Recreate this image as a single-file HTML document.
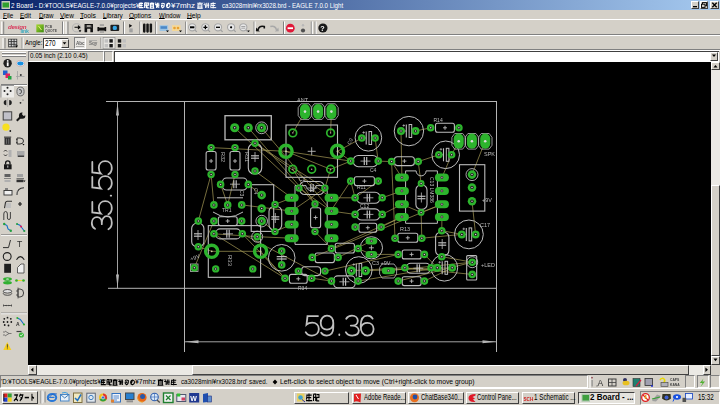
<!DOCTYPE html>
<html><head><meta charset="utf-8">
<style>
*{margin:0;padding:0;box-sizing:border-box}
html,body{width:720px;height:405px;overflow:hidden;background:#d4d0c8}
body{position:relative;font-family:"Liberation Sans",sans-serif;color:#000}
.a{position:absolute}
.t{position:absolute;white-space:nowrap;line-height:1;transform-origin:0 0}
.sunk{position:absolute;border-top:1px solid #808080;border-left:1px solid #808080;border-bottom:1px solid #fff;border-right:1px solid #fff}
.rais{position:absolute;border-top:1px solid #fff;border-left:1px solid #fff;border-bottom:1px solid #404040;border-right:1px solid #404040;background:#d4d0c8}
.kj{position:absolute}.kj i{position:absolute;top:0;bottom:0;border:1px solid currentColor;border-width:1px 1px 0 1px;background:linear-gradient(currentColor,currentColor) 0 45%/100% 1px no-repeat;opacity:.75}
u{text-underline-offset:0.2px;text-decoration-thickness:0.8px}
svg text{font-family:"Liberation Sans",sans-serif}
</style></head><body>
<!-- title bar -->
<div class="a" style="left:0;top:0;width:720px;height:10px;background:linear-gradient(90deg,#0a246a 0%,#a6caf0 100%)"></div>
<div class="rais" style="left:691px;top:1px;width:8px;height:8px"></div>
<div class="rais" style="left:700px;top:1px;width:8px;height:8px"></div>
<div class="rais" style="left:710px;top:1px;width:9px;height:8px"></div>
<!-- menu -->
<!-- toolbar separators -->
<div class="a" style="left:0;top:19px;width:720px;height:1px;background:#fff"></div>
<div class="a" style="left:0;top:34px;width:720px;height:1px;background:#808080"></div>
<div class="a" style="left:0;top:35px;width:720px;height:1px;background:#fff"></div>
<div class="a" style="left:0;top:49px;width:720px;height:1px;background:#808080"></div>
<div class="a" style="left:0;top:50px;width:720px;height:1px;background:#fff"></div>
<!-- toolbar 2 texts -->
<div class="a" style="left:43px;top:38px;width:26px;height:10.5px;background:#fff;border-top:1px solid #404040;border-left:1px solid #404040;border-bottom:1px solid #fff;border-right:1px solid #fff"></div>
<div class="rais" style="left:60.5px;top:39px;width:8px;height:8.5px"></div>
<div class="sunk" style="left:74px;top:37px;width:12px;height:12px;background:#e8e6e2"></div>
<!-- coordinate row -->
<div class="sunk" style="left:28px;top:50.5px;width:75.5px;height:11px"></div>
<div class="sunk" style="left:104px;top:50.5px;width:8.5px;height:11px"></div>
<div class="a" style="left:113.5px;top:50.5px;width:605px;height:11px;background:#fff;border-top:1px solid #404040;border-left:1px solid #404040"></div>
<div class="rais" style="left:710px;top:51.5px;width:8px;height:9px"></div>
<!-- canvas -->
<div class="a" style="left:28px;top:62px;width:683px;height:303px;background:#000"></div>
<!-- v scrollbar -->
<div class="a" style="left:711px;top:62px;width:9px;height:303px;background:#ebe9e4"></div>
<div class="rais" style="left:711px;top:62px;width:9px;height:8px"></div>
<div class="rais" style="left:711px;top:184.5px;width:9px;height:171px"></div>
<div class="rais" style="left:711px;top:356px;width:9px;height:8.5px"></div>
<!-- h scrollbar -->
<div class="a" style="left:28px;top:365px;width:683px;height:9.5px;background:#ebe9e4"></div>
<div class="rais" style="left:28px;top:365px;width:9px;height:9.5px"></div>
<div class="rais" style="left:191.5px;top:365px;width:497.5px;height:9.5px"></div>
<div class="rais" style="left:702.5px;top:365px;width:8.5px;height:9.5px"></div>
<!-- status bar -->
<div class="sunk" style="left:0;top:375px;width:588px;height:13px"></div>
<div class="sunk" style="left:685px;top:375px;width:10px;height:13px"></div>
<div class="sunk" style="left:697px;top:375px;width:12px;height:13px"></div>
<div class="sunk" style="left:710px;top:375px;width:10px;height:13px"></div>
<!-- taskbar -->
<div class="a" style="left:0;top:388px;width:720px;height:17px;background:#d4d0c8;border-top:1px solid #fff"></div>
<div class="rais" style="left:2px;top:391px;width:36px;height:13px"></div>
<div class="rais" style="left:294px;top:391.5px;width:55px;height:12.5px"></div>
<div class="rais" style="left:351.5px;top:391.5px;width:54.5px;height:12.5px"></div>
<div class="rais" style="left:408px;top:391.5px;width:55.5px;height:12.5px"></div>
<div class="rais" style="left:465.5px;top:391.5px;width:53.5px;height:12.5px"></div>
<div class="rais" style="left:521.5px;top:391.5px;width:53.5px;height:12.5px"></div>
<div class="a" style="left:577.5px;top:391.5px;width:57px;height:12.5px;background:#e4e2dc;border-top:1px solid #404040;border-left:1px solid #404040;border-bottom:1px solid #fff;border-right:1px solid #fff"></div>
<div class="sunk" style="left:639.5px;top:391px;width:80.5px;height:13.5px"></div>
<div class="t" id="t1" style="left:10.60px;top:1.61px;font-size:7.54px;font-weight:normal;color:#fff;transform:scaleX(0.8365)">2 Board - D:¥TOOLS¥EAGLE-7.0.0¥projects¥</div>
<div class="t" id="t3" style="left:170.90px;top:1.61px;font-size:7.54px;font-weight:normal;color:#fff;transform:scaleX(1.0659)">¥7mhz</div>
<div class="t" id="t5" style="left:221.60px;top:1.61px;font-size:7.54px;font-weight:normal;color:#fff;transform:scaleX(0.8194)">ca3028mini¥rx3028.brd - EAGLE 7.0.0 Light</div>
<div class="t" id="m1" style="left:3.10px;top:12.08px;font-size:7.00px;font-weight:normal;color:#000;transform:scaleX(0.9118)"><u>F</u>ile</div>
<div class="t" id="m2" style="left:20.40px;top:12.08px;font-size:7.00px;font-weight:normal;color:#000;transform:scaleX(0.9149)"><u>E</u>dit</div>
<div class="t" id="m3" style="left:38.50px;top:12.08px;font-size:7.00px;font-weight:normal;color:#000;transform:scaleX(0.8872)"><u>D</u>raw</div>
<div class="t" id="m4" style="left:60.00px;top:12.08px;font-size:7.00px;font-weight:normal;color:#000;transform:scaleX(0.9162)"><u>V</u>iew</div>
<div class="t" id="m5" style="left:80.20px;top:12.08px;font-size:7.00px;font-weight:normal;color:#000;transform:scaleX(0.9667)"><u>T</u>ools</div>
<div class="t" id="m6" style="left:103.20px;top:12.08px;font-size:7.00px;font-weight:normal;color:#000;transform:scaleX(0.9243)"><u>L</u>ibrary</div>
<div class="t" id="m7" style="left:129.30px;top:12.08px;font-size:7.00px;font-weight:normal;color:#000;transform:scaleX(0.9175)"><u>O</u>ptions</div>
<div class="t" id="m8" style="left:158.50px;top:12.08px;font-size:7.00px;font-weight:normal;color:#000;transform:scaleX(0.8592)"><u>W</u>indow</div>
<div class="t" id="m9" style="left:187.00px;top:12.08px;font-size:7.00px;font-weight:normal;color:#000;transform:scaleX(0.9510)"><u>H</u>elp</div>
<div class="t" id="an" style="left:25.20px;top:39.66px;font-size:7.13px;font-weight:normal;color:#000;transform:scaleX(0.8662)">Angle:</div>
<div class="t" id="a2" style="left:44.60px;top:39.63px;font-size:8.23px;font-weight:normal;color:#000;transform:scaleX(0.7727)">270</div>
<div class="t" id="co" style="left:30.20px;top:52.42px;font-size:7.06px;font-weight:normal;color:#000;transform:scaleX(0.8895)">0.05 inch (2.10 0.45)</div>
<div class="t" id="s1" style="left:1.10px;top:378.30px;font-size:7.68px;font-weight:normal;color:#000;transform:scaleX(0.8047)">'D:¥TOOLS¥EAGLE-7.0.0¥projects¥</div>
<div class="t" id="s3" style="left:135.40px;top:378.30px;font-size:7.68px;font-weight:normal;color:#000;transform:scaleX(0.8944)">¥7mhz</div>
<div class="t" id="s5" style="left:181.30px;top:378.30px;font-size:7.68px;font-weight:normal;color:#000;transform:scaleX(0.8121)">ca3028mini¥rx3028.brd' saved.</div>
<div class="t" id="s7" style="left:279.60px;top:378.30px;font-size:7.68px;font-weight:normal;color:#000;transform:scaleX(0.8837)">Left-click to select object to move (Ctrl+right-click to move group)</div>
<div class="t" id="b1" style="left:363.60px;top:393.53px;font-size:8.23px;font-weight:normal;color:#000;transform:scaleX(0.7282)">Adobe Reade...</div>
<div class="t" id="b2" style="left:420.60px;top:393.53px;font-size:8.23px;font-weight:normal;color:#000;transform:scaleX(0.7341)">ChatBase340...</div>
<div class="t" id="b3" style="left:476.60px;top:393.53px;font-size:8.23px;font-weight:normal;color:#000;transform:scaleX(0.7223)">Control Pane...</div>
<div class="t" id="b4" style="left:533.60px;top:393.53px;font-size:8.23px;font-weight:normal;color:#000;transform:scaleX(0.7653)">1 Schematic ...</div>
<div class="t" id="b5" style="left:589.60px;top:393.53px;font-size:8.23px;font-weight:bold;color:#000;transform:scaleX(0.9740)">2 Board - ...</div>
<div class="t" id="ck" style="left:697.90px;top:393.53px;font-size:8.23px;font-weight:normal;color:#000;transform:scaleX(0.7581)">15:32</div>
<svg class="a" style="left:0;top:0" width="720" height="405" viewBox="0 0 720 405"><path transform="translate(138.80,2.30) scale(0.769,0.952)" d="M0.3,1.2H5.5M2.9,0V6.3M0.8,3.3H5M0,5.6H6M1,1.2L0.4,4.8" fill="none" stroke="#fff" stroke-width="1.30"/><path transform="translate(144.22,2.30) scale(0.769,0.952)" d="M0.5,0.5H2.6V6M0.5,0.5V6M0.5,3H2.6M3.4,0.8H5.8V3H3.6V5.8H6" fill="none" stroke="#fff" stroke-width="1.30"/><path transform="translate(149.63,2.30) scale(0.769,0.952)" d="M0.2,1H6M3,0V1.2M1,2H5V6H1ZM1,4H5M0,6.2H6" fill="none" stroke="#fff" stroke-width="1.30"/><path transform="translate(155.05,2.30) scale(0.769,0.952)" d="M0.5,0.4L1.6,1.6M0,2.5H2V6M3.2,0.5V5.5M4.8,0.5V6M3.2,3H5.8" fill="none" stroke="#fff" stroke-width="1.30"/><path transform="translate(160.47,2.30) scale(0.769,0.952)" d="M1,1.5Q3,0.5 5,1.5Q5.5,4.5 3,5.8Q0.8,5 1.2,3.2Q2.5,2.2 3.5,4" fill="none" stroke="#fff" stroke-width="1.30"/><path transform="translate(165.88,2.30) scale(0.769,0.952)" d="M3,1Q0.5,1.5 0.8,4Q1.2,6 3.2,5.6Q5.6,5 5.4,3Q5,0.8 3,1M3,1Q2,4 1,5.5" fill="none" stroke="#fff" stroke-width="1.30"/><path transform="translate(197.00,2.30) scale(0.978,0.952)" d="M0.2,1H6M3,0V1.2M1,2H5V6H1ZM1,4H5M0,6.2H6" fill="none" stroke="#fff" stroke-width="1.02"/><path transform="translate(203.67,2.30) scale(0.978,0.952)" d="M0.5,0.4L1.6,1.6M0,2.5H2V6M3.2,0.5V5.5M4.8,0.5V6M3.2,3H5.8" fill="none" stroke="#fff" stroke-width="1.02"/><path transform="translate(210.33,2.30) scale(0.978,0.952)" d="M0.3,1.2H5.5M2.9,0V6.3M0.8,3.3H5M0,5.6H6M1,1.2L0.4,4.8" fill="none" stroke="#fff" stroke-width="1.02"/><path transform="translate(100.80,379.00) scale(0.839,1.000)" d="M0.3,1.2H5.5M2.9,0V6.3M0.8,3.3H5M0,5.6H6M1,1.2L0.4,4.8" fill="none" stroke="#000" stroke-width="1.19"/><path transform="translate(106.63,379.00) scale(0.839,1.000)" d="M0.5,0.5H2.6V6M0.5,0.5V6M0.5,3H2.6M3.4,0.8H5.8V3H3.6V5.8H6" fill="none" stroke="#000" stroke-width="1.19"/><path transform="translate(112.47,379.00) scale(0.839,1.000)" d="M0.2,1H6M3,0V1.2M1,2H5V6H1ZM1,4H5M0,6.2H6" fill="none" stroke="#000" stroke-width="1.19"/><path transform="translate(118.30,379.00) scale(0.839,1.000)" d="M0.5,0.4L1.6,1.6M0,2.5H2V6M3.2,0.5V5.5M4.8,0.5V6M3.2,3H5.8" fill="none" stroke="#000" stroke-width="1.19"/><path transform="translate(124.13,379.00) scale(0.839,1.000)" d="M1,1.5Q3,0.5 5,1.5Q5.5,4.5 3,5.8Q0.8,5 1.2,3.2Q2.5,2.2 3.5,4" fill="none" stroke="#000" stroke-width="1.19"/><path transform="translate(129.97,379.00) scale(0.839,1.000)" d="M3,1Q0.5,1.5 0.8,4Q1.2,6 3.2,5.6Q5.6,5 5.4,3Q5,0.8 3,1M3,1Q2,4 1,5.5" fill="none" stroke="#000" stroke-width="1.19"/><path transform="translate(157.50,379.00) scale(0.978,1.000)" d="M0.2,1H6M3,0V1.2M1,2H5V6H1ZM1,4H5M0,6.2H6" fill="none" stroke="#000" stroke-width="1.02"/><path transform="translate(164.17,379.00) scale(0.978,1.000)" d="M0.5,0.4L1.6,1.6M0,2.5H2V6M3.2,0.5V5.5M4.8,0.5V6M3.2,3H5.8" fill="none" stroke="#000" stroke-width="1.02"/><path transform="translate(170.83,379.00) scale(0.978,1.000)" d="M0.3,1.2H5.5M2.9,0V6.3M0.8,3.3H5M0,5.6H6M1,1.2L0.4,4.8" fill="none" stroke="#000" stroke-width="1.02"/><path transform="translate(13.50,393.80) scale(0.783,1.175)" d="M1,1H5Q4,4 0.5,6M3,3.5L5.5,6" fill="none" stroke="#000" stroke-width="1.28"/><path transform="translate(19.00,393.80) scale(0.783,1.175)" d="M2,0L0.5,2.5M1.5,1H5Q4.5,4 1,6M2,3L4,4.5" fill="none" stroke="#000" stroke-width="1.28"/><path transform="translate(24.50,393.80) scale(0.783,1.175)" d="M0.3,3.2H5.7" fill="none" stroke="#000" stroke-width="1.28"/><path transform="translate(30.00,393.80) scale(0.783,1.175)" d="M2.5,0V6M2.5,2.5L5,3.8" fill="none" stroke="#000" stroke-width="1.28"/><path transform="translate(306.00,393.50) scale(1.033,1.270)" d="M0.3,1.2H5.5M2.9,0V6.3M0.8,3.3H5M0,5.6H6M1,1.2L0.4,4.8" fill="none" stroke="#000" stroke-width="0.97"/><path transform="translate(313.00,393.50) scale(1.033,1.270)" d="M0.5,0.5H2.6V6M0.5,0.5V6M0.5,3H2.6M3.4,0.8H5.8V3H3.6V5.8H6" fill="none" stroke="#000" stroke-width="0.97"/></svg>
<svg class="a" style="left:28px;top:62px;will-change:transform" width="683" height="303" viewBox="28 62 683 303">

<line x1="106" y1="101.5" x2="497" y2="101.5" stroke="#b4b4b4" stroke-width="1"/>
<line x1="108" y1="288.3" x2="497" y2="288.3" stroke="#b4b4b4" stroke-width="1"/>
<line x1="184.5" y1="101.5" x2="184.5" y2="352" stroke="#b4b4b4" stroke-width="1"/>
<line x1="496.5" y1="101.5" x2="496.5" y2="352" stroke="#b4b4b4" stroke-width="1"/>
<line x1="117.5" y1="101.5" x2="117.5" y2="288.3" stroke="#b4b4b4" stroke-width="0.9"/>
<path d="M117.5,102 L116,115.5 L119,115.5 Z M117.5,288 L116,274.5 L119,274.5 Z" fill="#b4b4b4"/>
<line x1="184.5" y1="341.8" x2="496.5" y2="341.8" stroke="#b4b4b4" stroke-width="0.9"/>
<path d="M185,341.8 L198.5,340.3 L198.5,343.3 Z M496,341.8 L482.5,340.3 L482.5,343.3 Z" fill="#b4b4b4"/>
<g transform="translate(305,315.6)" fill="none" stroke="#c0c0c0" stroke-width="1.8" stroke-linecap="round"><path transform="translate(0,0)" d="M13,0.5 H2.5 L1.5,9 C3,7.6 5,7 7.2,7 C11,7 13.8,9.6 13.8,13.4 C13.8,17.2 11,20 7,20 C4,20 1.8,18.7 0.7,16.6"/><path transform="translate(15,0)" d="M13.3,7.5 C13.3,11.5 10.5,14 7,14 C3.3,14 0.7,11.4 0.7,7.2 C0.7,3 3.5,0 7,0 C10.8,0 13.3,3 13.3,7.5 V12 C13.3,17 10.8,20 6.8,20 C4.3,20 2.4,19 1.2,17.2"/><path transform="translate(32.5,0)" d="M1.8,18.9 L1.8,19.4"/><path transform="translate(40,0)" d="M1.2,3.2 C2.3,1.2 4.4,0 7,0 C10.4,0 12.8,2.2 12.8,5.2 C12.8,8 10.6,10 7.3,10 H5.8 M7.3,10 C11.2,10 13.8,12.4 13.8,15 C13.8,18 11.2,20 7.2,20 C4.2,20 1.9,18.7 0.8,16.6"/><path transform="translate(55,0)" d="M12.6,3 C11.6,1.1 9.7,0 7.4,0 C3.2,0 0.7,4 0.7,10.5 C0.7,16.5 3.2,20 7.3,20 C11,20 13.6,17.3 13.6,13.5 C13.6,9.8 11,7.3 7.4,7.3 C4.3,7.3 1.9,9 0.8,12"/></g>
<g transform="translate(91.8,230) rotate(-90)" fill="none" stroke="#c0c0c0" stroke-width="1.8" stroke-linecap="round"><path transform="translate(0,0)" d="M1.2,3.2 C2.3,1.2 4.4,0 7,0 C10.4,0 12.8,2.2 12.8,5.2 C12.8,8 10.6,10 7.3,10 H5.8 M7.3,10 C11.2,10 13.8,12.4 13.8,15 C13.8,18 11.2,20 7.2,20 C4.2,20 1.9,18.7 0.8,16.6"/><path transform="translate(15,0)" d="M13,0.5 H2.5 L1.5,9 C3,7.6 5,7 7.2,7 C11,7 13.8,9.6 13.8,13.4 C13.8,17.2 11,20 7,20 C4,20 1.8,18.7 0.7,16.6"/><path transform="translate(32.5,0)" d="M1.8,18.9 L1.8,19.4"/><path transform="translate(40,0)" d="M13,0.5 H2.5 L1.5,9 C3,7.6 5,7 7.2,7 C11,7 13.8,9.6 13.8,13.4 C13.8,17.2 11,20 7,20 C4,20 1.8,18.7 0.7,16.6"/><path transform="translate(55,0)" d="M13,0.5 H2.5 L1.5,9 C3,7.6 5,7 7.2,7 C11,7 13.8,9.6 13.8,13.4 C13.8,17.2 11,20 7,20 C4,20 1.8,18.7 0.7,16.6"/></g>
<path d="M211.1,147.6 L286,151.3" fill="none" stroke="#a89c58" stroke-width="0.7"/>
<path d="M234.7,127.8 L298.9,188.1" fill="none" stroke="#a89c58" stroke-width="0.7"/>
<path d="M248.3,127.8 L315,204" fill="none" stroke="#a89c58" stroke-width="0.7"/>
<path d="M261.6,127.8 L331.5,211.1" fill="none" stroke="#a89c58" stroke-width="0.7"/>
<path d="M255,143.3 L324.9,188.1" fill="none" stroke="#a89c58" stroke-width="0.7"/>
<path d="M255,143.3 L331.5,197.8" fill="none" stroke="#a89c58" stroke-width="0.7"/>
<path d="M286,151.3 L330.6,169.3" fill="none" stroke="#a89c58" stroke-width="0.7"/>
<path d="M286,151.3 L350.7,161.1" fill="none" stroke="#a89c58" stroke-width="0.7"/>
<path d="M330.6,169.3 L350.7,161.1" fill="none" stroke="#a89c58" stroke-width="0.7"/>
<path d="M337.5,151.3 L350.7,161.1" fill="none" stroke="#a89c58" stroke-width="0.7"/>
<path d="M337.5,151.3 L361.8,138" fill="none" stroke="#a89c58" stroke-width="0.7"/>
<path d="M305,111.6 L292.8,132.9" fill="none" stroke="#a89c58" stroke-width="0.7"/>
<path d="M331.4,111.6 L330.6,132.9" fill="none" stroke="#a89c58" stroke-width="0.7"/>
<path d="M330.6,169.3 L324.9,188.1" fill="none" stroke="#a89c58" stroke-width="0.7"/>
<path d="M292.8,169.3 L315,204" fill="none" stroke="#a89c58" stroke-width="0.7"/>
<path d="M298.9,188.1 L331.5,211.1" fill="none" stroke="#a89c58" stroke-width="0.7"/>
<path d="M324.9,188.1 L291.7,211.1" fill="none" stroke="#a89c58" stroke-width="0.7"/>
<path d="M378.2,161.1 L391.6,161.6" fill="none" stroke="#a89c58" stroke-width="0.7"/>
<path d="M418.2,161.6 L438.8,154.8" fill="none" stroke="#a89c58" stroke-width="0.7"/>
<path d="M415.5,131 L430.7,127.8" fill="none" stroke="#a89c58" stroke-width="0.7"/>
<path d="M375.1,138 L378.2,161.1" fill="none" stroke="#a89c58" stroke-width="0.7"/>
<path d="M485.2,141.1 L472,174.6" fill="none" stroke="#a89c58" stroke-width="0.7"/>
<path d="M458.9,141.1 L451.6,154.8" fill="none" stroke="#a89c58" stroke-width="0.7"/>
<path d="M401.9,177.6 L391.6,161.6" fill="none" stroke="#a89c58" stroke-width="0.7"/>
<path d="M391.6,161.6 L395,238.2" fill="none" stroke="#a89c58" stroke-width="0.7"/>
<path d="M472,201.2 L475.6,234.4" fill="none" stroke="#a89c58" stroke-width="0.7"/>
<path d="M441.9,216.9 L441.8,230.7" fill="none" stroke="#a89c58" stroke-width="0.7"/>
<path d="M331.5,197.8 L355.1,197.8" fill="none" stroke="#a89c58" stroke-width="0.7"/>
<path d="M382.2,197.8 L401.9,190.9" fill="none" stroke="#a89c58" stroke-width="0.7"/>
<path d="M350.7,181.1 L355.1,197.8" fill="none" stroke="#a89c58" stroke-width="0.7"/>
<path d="M378.2,181.1 L355.1,197.8" fill="none" stroke="#a89c58" stroke-width="0.7"/>
<path d="M331.5,211.1 L355.1,214.4" fill="none" stroke="#a89c58" stroke-width="0.7"/>
<path d="M198.3,246.7 L211.7,251.3" fill="none" stroke="#a89c58" stroke-width="0.7"/>
<path d="M211.7,251.3 L260.6,251.3" fill="none" stroke="#a89c58" stroke-width="0.7"/>
<path d="M260.6,251.3 L285,278.2" fill="none" stroke="#a89c58" stroke-width="0.7"/>
<path d="M213.9,233.8 L285,278.2" fill="none" stroke="#a89c58" stroke-width="0.7"/>
<path d="M242.3,233.8 L285,278.2" fill="none" stroke="#a89c58" stroke-width="0.7"/>
<path d="M213.9,233.8 L257.2,236.7" fill="none" stroke="#a89c58" stroke-width="0.7"/>
<path d="M257.2,236.7 L291.7,238.2" fill="none" stroke="#a89c58" stroke-width="0.7"/>
<path d="M242.3,233.8 L331.5,281.1" fill="none" stroke="#a89c58" stroke-width="0.7"/>
<path d="M241.7,204.9 L291.7,211.1" fill="none" stroke="#a89c58" stroke-width="0.7"/>
<path d="M227.7,204.9 L220.6,184.4" fill="none" stroke="#a89c58" stroke-width="0.7"/>
<path d="M213.9,204.9 L211.1,174.4" fill="none" stroke="#a89c58" stroke-width="0.7"/>
<path d="M227.7,204.9 L235,174.4" fill="none" stroke="#a89c58" stroke-width="0.7"/>
<path d="M255,171 L291.7,197.8" fill="none" stroke="#a89c58" stroke-width="0.7"/>
<path d="M401.9,216.9 L331.5,248.5" fill="none" stroke="#a89c58" stroke-width="0.7"/>
<path d="M441.9,204.3 L312.2,257.4" fill="none" stroke="#a89c58" stroke-width="0.7"/>
<path d="M401.9,204.3 L421.1,212.4" fill="none" stroke="#a89c58" stroke-width="0.7"/>
<path d="M421.1,212.4 L441.9,204.3" fill="none" stroke="#a89c58" stroke-width="0.7"/>
<path d="M421.1,212.4 L421.8,238.2" fill="none" stroke="#a89c58" stroke-width="0.7"/>
<path d="M441.8,230.7 L461.8,234.4" fill="none" stroke="#a89c58" stroke-width="0.7"/>
<path d="M441.8,256.7 L472.2,262.2" fill="none" stroke="#a89c58" stroke-width="0.7"/>
<path d="M388.4,270.7 L472.2,262.2" fill="none" stroke="#a89c58" stroke-width="0.7"/>
<path d="M404.9,267.8 L472.2,274.4" fill="none" stroke="#a89c58" stroke-width="0.7"/>
<path d="M398.2,281.1 L472.2,262.2" fill="none" stroke="#a89c58" stroke-width="0.7"/>
<path d="M358.1,281.1 L437.3,267.8" fill="none" stroke="#a89c58" stroke-width="0.7"/>
<path d="M424.4,254.4 L437.3,267.8" fill="none" stroke="#a89c58" stroke-width="0.7"/>
<path d="M365.5,270.7 L452.2,267.8" fill="none" stroke="#a89c58" stroke-width="0.7"/>
<path d="M351.4,270.7 L404.9,267.8" fill="none" stroke="#a89c58" stroke-width="0.7"/>
<path d="M325,271.1 L398.2,254.4" fill="none" stroke="#a89c58" stroke-width="0.7"/>
<path d="M194.3,267.8 L213.9,221.1" fill="none" stroke="#a89c58" stroke-width="0.7"/>
<path d="M198.3,221.1 L211.1,174.4" fill="none" stroke="#a89c58" stroke-width="0.7"/>
<path d="M275,204.4 L291.7,197.8" fill="none" stroke="#a89c58" stroke-width="0.7"/>
<path d="M275,231.6 L291.7,224.4" fill="none" stroke="#a89c58" stroke-width="0.7"/>
<path d="M382.2,214.4 L401.9,204.3" fill="none" stroke="#a89c58" stroke-width="0.7"/>
<path d="M381.1,227.1 L401.9,216.9" fill="none" stroke="#a89c58" stroke-width="0.7"/>
<path d="M350.7,181.1 L330.6,211.1" fill="none" stroke="#a89c58" stroke-width="0.7"/>
<path d="M441.9,177.6 L451.6,154.8" fill="none" stroke="#a89c58" stroke-width="0.7"/>
<path d="M424.4,281.1 L452.2,267.8" fill="none" stroke="#a89c58" stroke-width="0.7"/>
<path d="M338.1,257.4 L371.4,241.1" fill="none" stroke="#a89c58" stroke-width="0.7"/>
<path d="M358.1,248.5 L371.4,254.4" fill="none" stroke="#a89c58" stroke-width="0.7"/>
<path d="M371.4,254.4 L398.2,254.4" fill="none" stroke="#a89c58" stroke-width="0.7"/>
<path d="M315,231.6 L331.5,248.5" fill="none" stroke="#a89c58" stroke-width="0.7"/>
<path d="M311.7,278.2 L331.5,281.1" fill="none" stroke="#a89c58" stroke-width="0.7"/>
<path d="M261.7,221.1 L275,231.6" fill="none" stroke="#a89c58" stroke-width="0.7"/>
<path d="M248.3,184.4 L261.7,195.1" fill="none" stroke="#a89c58" stroke-width="0.7"/>
<path d="M461.8,234.4 L421.8,238.2" fill="none" stroke="#a89c58" stroke-width="0.7"/>
<path d="M401,131 L401.9,177.6" fill="none" stroke="#a89c58" stroke-width="0.7"/>
<path d="M418.2,161.6 L421.1,183.5" fill="none" stroke="#a89c58" stroke-width="0.7"/>
<rect x="225" y="115.7" width="46.30000000000001" height="24.10000000000001" rx="0" fill="none" stroke="#bcbcbc" stroke-width="1.3"/>
<rect x="286" y="125" width="51.5" height="52.30000000000001" rx="0" fill="none" stroke="#bcbcbc" stroke-width="1.1"/>
<line x1="307.7" y1="151.3" x2="315.7" y2="151.3" stroke="#bcbcbc" stroke-width="0.9"/>
<line x1="311.7" y1="147.3" x2="311.7" y2="155.3" stroke="#bcbcbc" stroke-width="0.9"/>
<path d="M301.0,103.8 L309.0,103.8 L311.8,107.6 L311.8,115.6 L309.0,119.39999999999999 L301.0,119.39999999999999 L298.2,115.6 L298.2,107.6 Z" fill="none" stroke="#bcbcbc" stroke-width="0.8"/>
<path d="M314.1,103.8 L322.1,103.8 L324.90000000000003,107.6 L324.90000000000003,115.6 L322.1,119.39999999999999 L314.1,119.39999999999999 L311.3,115.6 L311.3,107.6 Z" fill="none" stroke="#bcbcbc" stroke-width="0.8"/>
<path d="M327.4,103.8 L335.4,103.8 L338.2,107.6 L338.2,115.6 L335.4,119.39999999999999 L327.4,119.39999999999999 L324.59999999999997,115.6 L324.59999999999997,107.6 Z" fill="none" stroke="#bcbcbc" stroke-width="0.8"/>
<path d="M454.7,133.5 L462.7,133.5 L465.5,137.3 L465.5,145.3 L462.7,149.10000000000002 L454.7,149.10000000000002 L451.9,145.3 L451.9,137.3 Z" fill="none" stroke="#bcbcbc" stroke-width="0.8"/>
<path d="M467.9,133.5 L475.9,133.5 L478.7,137.3 L478.7,145.3 L475.9,149.10000000000002 L467.9,149.10000000000002 L465.09999999999997,145.3 L465.09999999999997,137.3 Z" fill="none" stroke="#bcbcbc" stroke-width="0.8"/>
<path d="M481.2,133.5 L489.2,133.5 L492.0,137.3 L492.0,145.3 L489.2,149.10000000000002 L481.2,149.10000000000002 L478.4,145.3 L478.4,137.3 Z" fill="none" stroke="#bcbcbc" stroke-width="0.8"/>
<text x="297" y="102" font-size="5.5" fill="#bcbcbc">ANT</text>
<rect x="206.1" y="151.5" width="10.0" height="18.5" rx="2" fill="none" stroke="#bcbcbc" stroke-width="1.1"/>
<line x1="209.1" y1="161" x2="213.1" y2="161" stroke="#bcbcbc" stroke-width="0.9"/>
<line x1="211.1" y1="159" x2="211.1" y2="163" stroke="#bcbcbc" stroke-width="0.9"/>
<rect x="230" y="151.5" width="10" height="18.5" rx="2" fill="none" stroke="#bcbcbc" stroke-width="1.1"/>
<line x1="233" y1="161" x2="237" y2="161" stroke="#bcbcbc" stroke-width="0.9"/>
<line x1="235" y1="159" x2="235" y2="163" stroke="#bcbcbc" stroke-width="0.9"/>
<text x="221" y="152" font-size="5.5" fill="#bcbcbc" transform="rotate(90 221 152)">R32</text>
<text x="245" y="152" font-size="5.5" fill="#bcbcbc" transform="rotate(90 245 152)">R31</text>
<rect x="248.3" y="143.5" width="13.399999999999977" height="30.5" rx="6" fill="none" stroke="#bcbcbc" stroke-width="1.1"/>
<line x1="251" y1="155.8" x2="259" y2="155.8" stroke="#bcbcbc" stroke-width="1.2"/>
<line x1="251" y1="158.2" x2="259" y2="158.2" stroke="#bcbcbc" stroke-width="1.2"/>
<line x1="255" y1="152" x2="255" y2="162" stroke="#bcbcbc" stroke-width="0.8"/>
<rect x="222.5" y="178" width="24.5" height="12" rx="4" fill="none" stroke="#bcbcbc" stroke-width="1.1"/>
<line x1="233.8" y1="180.2" x2="233.8" y2="188.2" stroke="#bcbcbc" stroke-width="1.2"/>
<line x1="236.2" y1="180.2" x2="236.2" y2="188.2" stroke="#bcbcbc" stroke-width="1.2"/>
<line x1="230" y1="184.2" x2="240" y2="184.2" stroke="#bcbcbc" stroke-width="0.8"/>
<line x1="217" y1="197.8" x2="243" y2="197.8" stroke="#bcbcbc" stroke-width="1.0"/>
<text x="240" y="190" font-size="5" fill="#bcbcbc" transform="rotate(90 240 190)">C3</text>
<path d="M213,212 Q227.7,222 243,212" fill="none" stroke="#bcbcbc" stroke-width="1"/>
<text x="222" y="212" font-size="5" fill="#bcbcbc">TR1</text>
<rect x="251.2" y="184.7" width="22.5" height="46.70000000000002" rx="0" fill="none" stroke="#bcbcbc" stroke-width="1.1"/>
<text x="253.5" y="188" font-size="5" fill="#bcbcbc" transform="rotate(90 253.5 188)">C4</text>
<rect x="269" y="206.5" width="12.699999999999989" height="23.5" rx="5" fill="none" stroke="#bcbcbc" stroke-width="1.1"/>
<line x1="271.3" y1="216.8" x2="279.3" y2="216.8" stroke="#bcbcbc" stroke-width="1.2"/>
<line x1="271.3" y1="219.2" x2="279.3" y2="219.2" stroke="#bcbcbc" stroke-width="1.2"/>
<line x1="275.3" y1="213" x2="275.3" y2="223" stroke="#bcbcbc" stroke-width="0.8"/>
<path d="M295,185.6 L306,185.6 A5,5 0 0 0 316,185.6 L327.2,185.6 L327.2,244.4 L295,244.4 Z" fill="none" stroke="#bcbcbc" stroke-width="1"/>
<rect x="299.8" y="181.5" width="24.19999999999999" height="13.0" rx="5" fill="none" stroke="#bcbcbc" stroke-width="1.1"/>
<line x1="310.8" y1="184" x2="310.8" y2="192" stroke="#bcbcbc" stroke-width="1.2"/>
<line x1="313.2" y1="184" x2="313.2" y2="192" stroke="#bcbcbc" stroke-width="1.2"/>
<line x1="307" y1="188" x2="317" y2="188" stroke="#bcbcbc" stroke-width="0.8"/>
<text x="299" y="181" font-size="5" fill="#bcbcbc">C1</text>
<rect x="310.6" y="207.8" width="10.0" height="20.0" rx="2" fill="none" stroke="#bcbcbc" stroke-width="1.1"/>
<line x1="313.6" y1="217.5" x2="317.6" y2="217.5" stroke="#bcbcbc" stroke-width="0.9"/>
<line x1="315.6" y1="215.5" x2="315.6" y2="219.5" stroke="#bcbcbc" stroke-width="0.9"/>
<rect x="218.3" y="216.7" width="18.899999999999977" height="8.900000000000006" rx="2" fill="none" stroke="#bcbcbc" stroke-width="1.1"/>
<line x1="225.7" y1="221" x2="229.7" y2="221" stroke="#bcbcbc" stroke-width="0.9"/>
<line x1="227.7" y1="219" x2="227.7" y2="223" stroke="#bcbcbc" stroke-width="0.9"/>
<rect x="191.7" y="223.3" width="12.200000000000017" height="23.399999999999977" rx="5" fill="none" stroke="#bcbcbc" stroke-width="1.1"/>
<line x1="194" y1="233.8" x2="202" y2="233.8" stroke="#bcbcbc" stroke-width="1.2"/>
<line x1="194" y1="236.2" x2="202" y2="236.2" stroke="#bcbcbc" stroke-width="1.2"/>
<line x1="198" y1="230" x2="198" y2="240" stroke="#bcbcbc" stroke-width="0.8"/>
<rect x="208.3" y="225.6" width="52.30000000000001" height="51.70000000000002" rx="0" fill="none" stroke="#bcbcbc" stroke-width="1.1"/>
<rect x="216" y="228.9" width="24.5" height="10.0" rx="4" fill="none" stroke="#bcbcbc" stroke-width="1.1"/>
<line x1="226.8" y1="229.8" x2="226.8" y2="237.8" stroke="#bcbcbc" stroke-width="1.2"/>
<line x1="229.2" y1="229.8" x2="229.2" y2="237.8" stroke="#bcbcbc" stroke-width="1.2"/>
<line x1="223" y1="233.8" x2="233" y2="233.8" stroke="#bcbcbc" stroke-width="0.8"/>
<text x="228" y="255" font-size="6" fill="#bcbcbc" transform="rotate(90 228 255)">R33</text>
<circle cx="281.7" cy="257.8" r="13.3" fill="none" stroke="#bcbcbc" stroke-width="1.0"/>
<line x1="276.7" y1="256.6" x2="286.7" y2="256.6" stroke="#bcbcbc" stroke-width="1.2"/>
<line x1="276.7" y1="259.0" x2="286.7" y2="259.0" stroke="#bcbcbc" stroke-width="1.2"/>
<line x1="281.7" y1="252.8" x2="281.7" y2="262.8" stroke="#bcbcbc" stroke-width="0.8"/>
<rect x="315.2" y="253" width="19.19999999999999" height="9.600000000000023" rx="2" fill="none" stroke="#bcbcbc" stroke-width="1.1"/>
<rect x="335.2" y="243.3" width="19.19999999999999" height="9.699999999999989" rx="2" fill="none" stroke="#bcbcbc" stroke-width="1.1"/>
<rect x="289.4" y="274.4" width="17.80000000000001" height="8.900000000000034" rx="2" fill="none" stroke="#bcbcbc" stroke-width="1.1"/>
<line x1="296.3" y1="278.8" x2="300.3" y2="278.8" stroke="#bcbcbc" stroke-width="0.9"/>
<line x1="298.3" y1="276.8" x2="298.3" y2="280.8" stroke="#bcbcbc" stroke-width="0.9"/>
<text x="298" y="290" font-size="5" fill="#bcbcbc">R34</text>
<rect x="301.7" y="266.7" width="18.900000000000034" height="8.900000000000034" rx="3" fill="none" stroke="#bcbcbc" stroke-width="1.1"/>
<rect x="333.7" y="275.9" width="21.400000000000034" height="11.800000000000011" rx="4" fill="none" stroke="#bcbcbc" stroke-width="1.1"/>
<line x1="343.2" y1="277.8" x2="343.2" y2="285.8" stroke="#bcbcbc" stroke-width="1.2"/>
<line x1="345.59999999999997" y1="277.8" x2="345.59999999999997" y2="285.8" stroke="#bcbcbc" stroke-width="1.2"/>
<line x1="339.4" y1="281.8" x2="349.4" y2="281.8" stroke="#bcbcbc" stroke-width="0.8"/>
<rect x="190.5" y="264" width="7.5" height="7.5" rx="0" fill="none" stroke="#bcbcbc" stroke-width="0.8"/>
<text x="191" y="261" font-size="5.5" fill="#bcbcbc" transform="rotate(-20 191 261)">+9V</text>
<circle cx="368.4" cy="137.8" r="13.3" fill="none" stroke="#bcbcbc" stroke-width="1.0"/>
<line x1="366.2" y1="131.5" x2="366.2" y2="144.5" stroke="#bcbcbc" stroke-width="1.1"/>
<rect x="369.0" y="131.5" width="2.6" height="13.0" fill="none" stroke="#bcbcbc" stroke-width="1"/>
<line x1="361.4" y1="138" x2="366.2" y2="138" stroke="#bcbcbc" stroke-width="0.8"/>
<line x1="371.59999999999997" y1="138" x2="375.4" y2="138" stroke="#bcbcbc" stroke-width="0.8"/>
<line x1="362.4" y1="132.5" x2="364.9" y2="132.5" stroke="#bcbcbc" stroke-width="0.7"/>
<line x1="363.65" y1="131.25" x2="363.65" y2="133.75" stroke="#bcbcbc" stroke-width="0.7"/>
<text x="350" y="145" font-size="5" fill="#bcbcbc" transform="rotate(-60 350 145)">C9</text>
<circle cx="408.9" cy="131.1" r="14.7" fill="none" stroke="#bcbcbc" stroke-width="1.0"/>
<line x1="406.3" y1="124.5" x2="406.3" y2="137.5" stroke="#bcbcbc" stroke-width="1.1"/>
<rect x="409.1" y="124.5" width="2.6" height="13.0" fill="none" stroke="#bcbcbc" stroke-width="1"/>
<line x1="401.5" y1="131" x2="406.3" y2="131" stroke="#bcbcbc" stroke-width="0.8"/>
<line x1="411.7" y1="131" x2="415.5" y2="131" stroke="#bcbcbc" stroke-width="0.8"/>
<line x1="402.5" y1="125.5" x2="405.0" y2="125.5" stroke="#bcbcbc" stroke-width="0.7"/>
<line x1="403.75" y1="124.25" x2="403.75" y2="126.75" stroke="#bcbcbc" stroke-width="0.7"/>
<rect x="435.5" y="123.3" width="18.899999999999977" height="8.899999999999991" rx="2" fill="none" stroke="#bcbcbc" stroke-width="1.1"/>
<line x1="443" y1="127.8" x2="447" y2="127.8" stroke="#bcbcbc" stroke-width="0.9"/>
<line x1="445" y1="125.8" x2="445" y2="129.8" stroke="#bcbcbc" stroke-width="0.9"/>
<text x="433.5" y="121.5" font-size="5" fill="#bcbcbc">R14</text>
<text x="484" y="156" font-size="5.5" fill="#bcbcbc">SPK</text>
<circle cx="445.7" cy="154.8" r="13.8" fill="none" stroke="#bcbcbc" stroke-width="1.0"/>
<line x1="443.5" y1="148.3" x2="443.5" y2="161.3" stroke="#bcbcbc" stroke-width="1.1"/>
<rect x="446.3" y="148.3" width="2.6" height="13.0" fill="none" stroke="#bcbcbc" stroke-width="1"/>
<line x1="438.7" y1="154.8" x2="443.5" y2="154.8" stroke="#bcbcbc" stroke-width="0.8"/>
<line x1="448.9" y1="154.8" x2="452.7" y2="154.8" stroke="#bcbcbc" stroke-width="0.8"/>
<line x1="439.7" y1="149.3" x2="442.2" y2="149.3" stroke="#bcbcbc" stroke-width="0.7"/>
<line x1="440.95" y1="148.05" x2="440.95" y2="150.55" stroke="#bcbcbc" stroke-width="0.7"/>
<rect x="353.3" y="155.5" width="24.5" height="11.199999999999989" rx="5" fill="none" stroke="#bcbcbc" stroke-width="1.1"/>
<line x1="364.3" y1="157.1" x2="364.3" y2="165.1" stroke="#bcbcbc" stroke-width="1.2"/>
<line x1="366.7" y1="157.1" x2="366.7" y2="165.1" stroke="#bcbcbc" stroke-width="1.2"/>
<line x1="360.5" y1="161.1" x2="370.5" y2="161.1" stroke="#bcbcbc" stroke-width="0.8"/>
<text x="370" y="172" font-size="5" fill="#bcbcbc">C4</text>
<rect x="394.4" y="156.7" width="20.0" height="8.900000000000006" rx="3" fill="none" stroke="#bcbcbc" stroke-width="1.1"/>
<line x1="402.4" y1="161.1" x2="406.4" y2="161.1" stroke="#bcbcbc" stroke-width="0.9"/>
<line x1="404.4" y1="159.1" x2="404.4" y2="163.1" stroke="#bcbcbc" stroke-width="0.9"/>
<rect x="459.5" y="164.7" width="25.30000000000001" height="46.400000000000006" rx="0" fill="none" stroke="#bcbcbc" stroke-width="1.1"/>
<text x="482" y="202" font-size="5.5" fill="#bcbcbc">+9V</text>
<rect x="354.4" y="176.7" width="20.0" height="8.900000000000006" rx="2" fill="none" stroke="#bcbcbc" stroke-width="1.1"/>
<line x1="362.4" y1="181.1" x2="366.4" y2="181.1" stroke="#bcbcbc" stroke-width="0.9"/>
<line x1="364.4" y1="179.1" x2="364.4" y2="183.1" stroke="#bcbcbc" stroke-width="0.9"/>
<text x="357" y="189" font-size="5" fill="#bcbcbc">R11</text>
<path d="M405.6,170.9 L416.1,170.9 A5,5 0 0 0 426.1,170.9 L437.4,170.9 L437.4,223.3 L405.6,223.3 Z" fill="none" stroke="#bcbcbc" stroke-width="1"/>
<rect x="415.9" y="185" width="11.100000000000023" height="24.400000000000006" rx="5" fill="none" stroke="#bcbcbc" stroke-width="1.1"/>
<line x1="417.4" y1="196.3" x2="425.4" y2="196.3" stroke="#bcbcbc" stroke-width="1.2"/>
<line x1="417.4" y1="198.7" x2="425.4" y2="198.7" stroke="#bcbcbc" stroke-width="1.2"/>
<line x1="421.4" y1="192.5" x2="421.4" y2="202.5" stroke="#bcbcbc" stroke-width="0.8"/>
<text x="430" y="177" font-size="5" fill="#bcbcbc" transform="rotate(90 430 177)">C13 LM386</text>
<rect x="356.7" y="192.2" width="23.30000000000001" height="11.100000000000023" rx="5" fill="none" stroke="#bcbcbc" stroke-width="1.1"/>
<line x1="367.2" y1="193.8" x2="367.2" y2="201.8" stroke="#bcbcbc" stroke-width="1.2"/>
<line x1="369.59999999999997" y1="193.8" x2="369.59999999999997" y2="201.8" stroke="#bcbcbc" stroke-width="1.2"/>
<line x1="363.4" y1="197.8" x2="373.4" y2="197.8" stroke="#bcbcbc" stroke-width="0.8"/>
<text x="360" y="208" font-size="5" fill="#bcbcbc">C12</text>
<rect x="356.7" y="208.9" width="23.30000000000001" height="11.099999999999994" rx="5" fill="none" stroke="#bcbcbc" stroke-width="1.1"/>
<line x1="367.2" y1="210.4" x2="367.2" y2="218.4" stroke="#bcbcbc" stroke-width="1.2"/>
<line x1="369.59999999999997" y1="210.4" x2="369.59999999999997" y2="218.4" stroke="#bcbcbc" stroke-width="1.2"/>
<line x1="363.4" y1="214.4" x2="373.4" y2="214.4" stroke="#bcbcbc" stroke-width="0.8"/>
<rect x="358.9" y="223.3" width="17.80000000000001" height="8.899999999999977" rx="2" fill="none" stroke="#bcbcbc" stroke-width="1.1"/>
<line x1="365.8" y1="227.7" x2="369.8" y2="227.7" stroke="#bcbcbc" stroke-width="0.9"/>
<line x1="367.8" y1="225.7" x2="367.8" y2="229.7" stroke="#bcbcbc" stroke-width="0.9"/>
<circle cx="468.9" cy="234.4" r="14.4" fill="none" stroke="#bcbcbc" stroke-width="1.0"/>
<line x1="466.3" y1="227.9" x2="466.3" y2="240.9" stroke="#bcbcbc" stroke-width="1.1"/>
<rect x="469.1" y="227.9" width="2.6" height="13.0" fill="none" stroke="#bcbcbc" stroke-width="1"/>
<line x1="461.5" y1="234.4" x2="466.3" y2="234.4" stroke="#bcbcbc" stroke-width="0.8"/>
<line x1="471.7" y1="234.4" x2="475.5" y2="234.4" stroke="#bcbcbc" stroke-width="0.8"/>
<line x1="462.5" y1="228.9" x2="465.0" y2="228.9" stroke="#bcbcbc" stroke-width="0.7"/>
<line x1="463.75" y1="227.65" x2="463.75" y2="230.15" stroke="#bcbcbc" stroke-width="0.7"/>
<text x="480" y="227" font-size="5.5" fill="#bcbcbc">C17</text>
<rect x="435.6" y="232.2" width="13.299999999999955" height="23.400000000000006" rx="5" fill="none" stroke="#bcbcbc" stroke-width="1.1"/>
<line x1="438.2" y1="242.8" x2="446.2" y2="242.8" stroke="#bcbcbc" stroke-width="1.2"/>
<line x1="438.2" y1="245.2" x2="446.2" y2="245.2" stroke="#bcbcbc" stroke-width="1.2"/>
<line x1="442.2" y1="239" x2="442.2" y2="249" stroke="#bcbcbc" stroke-width="0.8"/>
<rect x="397.8" y="233.3" width="20.0" height="8.899999999999977" rx="2" fill="none" stroke="#bcbcbc" stroke-width="1.1"/>
<line x1="405.8" y1="237.8" x2="409.8" y2="237.8" stroke="#bcbcbc" stroke-width="0.9"/>
<line x1="407.8" y1="235.8" x2="407.8" y2="239.8" stroke="#bcbcbc" stroke-width="0.9"/>
<text x="400" y="231" font-size="5.5" fill="#bcbcbc">R13</text>
<circle cx="371.4" cy="247.8" r="11.1" fill="none" stroke="#bcbcbc" stroke-width="1.0"/>
<line x1="368.9" y1="247.8" x2="373.9" y2="247.8" stroke="#bcbcbc" stroke-width="0.9"/>
<line x1="371.4" y1="245.3" x2="371.4" y2="250.3" stroke="#bcbcbc" stroke-width="0.9"/>
<text x="372" y="264.5" font-size="5.5" fill="#bcbcbc">C3 +9V</text>
<rect x="402.2" y="250" width="18.900000000000034" height="8.899999999999977" rx="2" fill="none" stroke="#bcbcbc" stroke-width="1.1"/>
<line x1="409.6" y1="254.4" x2="413.6" y2="254.4" stroke="#bcbcbc" stroke-width="0.9"/>
<line x1="411.6" y1="252.4" x2="411.6" y2="256.4" stroke="#bcbcbc" stroke-width="0.9"/>
<rect x="406.7" y="263.3" width="23.30000000000001" height="10.0" rx="4" fill="none" stroke="#bcbcbc" stroke-width="1.1"/>
<line x1="417.1" y1="264.3" x2="417.1" y2="272.3" stroke="#bcbcbc" stroke-width="1.2"/>
<line x1="419.5" y1="264.3" x2="419.5" y2="272.3" stroke="#bcbcbc" stroke-width="1.2"/>
<line x1="413.3" y1="268.3" x2="423.3" y2="268.3" stroke="#bcbcbc" stroke-width="0.8"/>
<rect x="402.2" y="276.7" width="18.900000000000034" height="8.900000000000034" rx="2" fill="none" stroke="#bcbcbc" stroke-width="1.1"/>
<line x1="409.6" y1="281.1" x2="413.6" y2="281.1" stroke="#bcbcbc" stroke-width="0.9"/>
<line x1="411.6" y1="279.1" x2="411.6" y2="283.1" stroke="#bcbcbc" stroke-width="0.9"/>
<circle cx="444.4" cy="267.8" r="13.3" fill="none" stroke="#bcbcbc" stroke-width="1.0"/>
<line x1="442.2" y1="261.3" x2="442.2" y2="274.3" stroke="#bcbcbc" stroke-width="1.1"/>
<rect x="445.0" y="261.3" width="2.6" height="13.0" fill="none" stroke="#bcbcbc" stroke-width="1"/>
<line x1="437.4" y1="267.8" x2="442.2" y2="267.8" stroke="#bcbcbc" stroke-width="0.8"/>
<line x1="447.59999999999997" y1="267.8" x2="451.4" y2="267.8" stroke="#bcbcbc" stroke-width="0.8"/>
<line x1="438.4" y1="262.3" x2="440.9" y2="262.3" stroke="#bcbcbc" stroke-width="0.7"/>
<line x1="439.65" y1="261.05" x2="439.65" y2="263.55" stroke="#bcbcbc" stroke-width="0.7"/>
<rect x="466.7" y="255.6" width="10.0" height="24.400000000000006" rx="1" fill="none" stroke="#bcbcbc" stroke-width="1.1"/>
<text x="481" y="266.5" font-size="5.5" fill="#bcbcbc">+LED</text>
<circle cx="358.8" cy="270" r="13.3" fill="none" stroke="#bcbcbc" stroke-width="1.0"/>
<line x1="356.3" y1="263.5" x2="356.3" y2="276.5" stroke="#bcbcbc" stroke-width="1.1"/>
<rect x="359.1" y="263.5" width="2.6" height="13.0" fill="none" stroke="#bcbcbc" stroke-width="1"/>
<line x1="351.5" y1="270" x2="356.3" y2="270" stroke="#bcbcbc" stroke-width="0.8"/>
<line x1="361.7" y1="270" x2="365.5" y2="270" stroke="#bcbcbc" stroke-width="0.8"/>
<line x1="352.5" y1="264.5" x2="355.0" y2="264.5" stroke="#bcbcbc" stroke-width="0.7"/>
<line x1="353.75" y1="263.25" x2="353.75" y2="265.75" stroke="#bcbcbc" stroke-width="0.7"/>
<path d="M382,264 L394,264 L396.6,267.5 L396.6,274 L394,278 L382,278 L379.6,274 L379.6,267.5 Z" fill="none" stroke="#bcbcbc" stroke-width="0.8"/>
<circle cx="234.7" cy="127.8" r="4.56" fill="#2db42d"/><circle cx="234.7" cy="127.8" r="1.82" fill="#1a1a1a"/><circle cx="234.7" cy="127.8" r="0.75" fill="#e0c8d8"/>
<circle cx="248.3" cy="127.8" r="4.56" fill="#2db42d"/><circle cx="248.3" cy="127.8" r="1.82" fill="#1a1a1a"/><circle cx="248.3" cy="127.8" r="0.75" fill="#e0c8d8"/>
<circle cx="261.6" cy="127.8" r="4.56" fill="#2db42d"/><circle cx="261.6" cy="127.8" r="1.82" fill="#1a1a1a"/><circle cx="261.6" cy="127.8" r="0.75" fill="#e0c8d8"/>
<circle cx="261.6" cy="127.8" r="5.9" fill="none" stroke="#bcbcbc" stroke-width="0.9"/>
<rect x="300" y="104" width="10" height="15.2" rx="5" fill="#2db42d"/><circle cx="305" cy="111.6" r="1.3" fill="#ddd"/>
<rect x="313.1" y="104" width="10" height="15.2" rx="5" fill="#2db42d"/><circle cx="318.1" cy="111.6" r="1.3" fill="#ddd"/>
<rect x="326.4" y="104" width="10" height="15.2" rx="5" fill="#2db42d"/><circle cx="331.4" cy="111.6" r="1.3" fill="#ddd"/>
<circle cx="292.8" cy="132.9" r="3.85" fill="none" stroke="#2db42d" stroke-width="1.7000000000000002"/><circle cx="292.8" cy="132.9" r="0.7" fill="#c8a0b0"/>
<circle cx="330.6" cy="132.9" r="3.85" fill="none" stroke="#2db42d" stroke-width="1.7000000000000002"/><circle cx="330.6" cy="132.9" r="0.7" fill="#c8a0b0"/>
<circle cx="292.8" cy="169.3" r="3.85" fill="none" stroke="#2db42d" stroke-width="1.7000000000000002"/><circle cx="292.8" cy="169.3" r="0.7" fill="#c8a0b0"/>
<circle cx="311.7" cy="169.3" r="3.85" fill="none" stroke="#2db42d" stroke-width="1.7000000000000002"/><circle cx="311.7" cy="169.3" r="0.7" fill="#c8a0b0"/>
<circle cx="330.6" cy="169.3" r="3.85" fill="none" stroke="#2db42d" stroke-width="1.7000000000000002"/><circle cx="330.6" cy="169.3" r="0.7" fill="#c8a0b0"/>
<circle cx="286" cy="151.3" r="6.1" fill="none" stroke="#2db42d" stroke-width="3.3999999999999995"/><circle cx="286" cy="151.3" r="0.9" fill="#d0d0a0"/>
<circle cx="337.5" cy="151.3" r="6.1" fill="none" stroke="#2db42d" stroke-width="3.3999999999999995"/><circle cx="337.5" cy="151.3" r="0.9" fill="#d0d0a0"/>
<circle cx="211.1" cy="147.6" r="3.7049999999999996" fill="#2db42d"/><circle cx="211.1" cy="147.6" r="1.48" fill="#1a1a1a"/><circle cx="211.1" cy="147.6" r="0.75" fill="#e0c8d8"/>
<circle cx="211.1" cy="174.4" r="3.7049999999999996" fill="#2db42d"/><circle cx="211.1" cy="174.4" r="1.48" fill="#1a1a1a"/><circle cx="211.1" cy="174.4" r="0.75" fill="#e0c8d8"/>
<circle cx="235" cy="147.6" r="3.7049999999999996" fill="#2db42d"/><circle cx="235" cy="147.6" r="1.48" fill="#1a1a1a"/><circle cx="235" cy="147.6" r="0.75" fill="#e0c8d8"/>
<circle cx="235" cy="174.4" r="3.7049999999999996" fill="#2db42d"/><circle cx="235" cy="174.4" r="1.48" fill="#1a1a1a"/><circle cx="235" cy="174.4" r="0.75" fill="#e0c8d8"/>
<circle cx="255" cy="143.3" r="3.7049999999999996" fill="#2db42d"/><circle cx="255" cy="143.3" r="1.48" fill="#1a1a1a"/><circle cx="255" cy="143.3" r="0.75" fill="#e0c8d8"/>
<circle cx="255" cy="171" r="3.7049999999999996" fill="#2db42d"/><circle cx="255" cy="171" r="1.48" fill="#1a1a1a"/><circle cx="255" cy="171" r="0.75" fill="#e0c8d8"/>
<circle cx="220.6" cy="184.4" r="3.8" fill="#2db42d"/><circle cx="220.6" cy="184.4" r="1.52" fill="#1a1a1a"/><circle cx="220.6" cy="184.4" r="0.75" fill="#e0c8d8"/>
<circle cx="248.3" cy="184.4" r="3.8" fill="#2db42d"/><circle cx="248.3" cy="184.4" r="1.52" fill="#1a1a1a"/><circle cx="248.3" cy="184.4" r="0.75" fill="#e0c8d8"/>
<circle cx="213.9" cy="204.9" r="3.8" fill="#2db42d"/><circle cx="213.9" cy="204.9" r="1.52" fill="#1a1a1a"/><circle cx="213.9" cy="204.9" r="0.75" fill="#e0c8d8"/>
<circle cx="227.7" cy="204.9" r="3.8" fill="#2db42d"/><circle cx="227.7" cy="204.9" r="1.52" fill="#1a1a1a"/><circle cx="227.7" cy="204.9" r="0.75" fill="#e0c8d8"/>
<circle cx="241.7" cy="204.9" r="3.8" fill="#2db42d"/><circle cx="241.7" cy="204.9" r="1.52" fill="#1a1a1a"/><circle cx="241.7" cy="204.9" r="0.75" fill="#e0c8d8"/>
<circle cx="261.7" cy="195.1" r="4.2749999999999995" fill="#2db42d"/><circle cx="261.7" cy="195.1" r="1.71" fill="#1a1a1a"/><circle cx="261.7" cy="195.1" r="0.75" fill="#e0c8d8"/>
<circle cx="261.7" cy="208.4" r="4.2749999999999995" fill="#2db42d"/><circle cx="261.7" cy="208.4" r="1.71" fill="#1a1a1a"/><circle cx="261.7" cy="208.4" r="0.75" fill="#e0c8d8"/>
<circle cx="261.7" cy="221.1" r="4.2749999999999995" fill="#2db42d"/><circle cx="261.7" cy="221.1" r="1.71" fill="#1a1a1a"/><circle cx="261.7" cy="221.1" r="0.75" fill="#e0c8d8"/>
<circle cx="261.7" cy="221.1" r="5.8" fill="none" stroke="#bcbcbc" stroke-width="0.9"/>
<circle cx="275" cy="204.4" r="3.7049999999999996" fill="#2db42d"/><circle cx="275" cy="204.4" r="1.48" fill="#1a1a1a"/><circle cx="275" cy="204.4" r="0.75" fill="#e0c8d8"/>
<circle cx="275" cy="231.6" r="3.7049999999999996" fill="#2db42d"/><circle cx="275" cy="231.6" r="1.48" fill="#1a1a1a"/><circle cx="275" cy="231.6" r="0.75" fill="#e0c8d8"/>
<rect x="284.7" y="193.8" width="14" height="8" rx="4.0" fill="#2db42d"/><circle cx="291.7" cy="197.8" r="1.4" fill="#3a2a3a"/><circle cx="291.7" cy="197.8" r="0.7" fill="#d8a8c0"/>
<rect x="324.5" y="193.8" width="14" height="8" rx="4.0" fill="#2db42d"/><circle cx="331.5" cy="197.8" r="1.4" fill="#3a2a3a"/><circle cx="331.5" cy="197.8" r="0.7" fill="#d8a8c0"/>
<rect x="284.7" y="207.1" width="14" height="8" rx="4.0" fill="#2db42d"/><circle cx="291.7" cy="211.1" r="1.4" fill="#3a2a3a"/><circle cx="291.7" cy="211.1" r="0.7" fill="#d8a8c0"/>
<rect x="324.5" y="207.1" width="14" height="8" rx="4.0" fill="#2db42d"/><circle cx="331.5" cy="211.1" r="1.4" fill="#3a2a3a"/><circle cx="331.5" cy="211.1" r="0.7" fill="#d8a8c0"/>
<rect x="284.7" y="220.4" width="14" height="8" rx="4.0" fill="#2db42d"/><circle cx="291.7" cy="224.4" r="1.4" fill="#3a2a3a"/><circle cx="291.7" cy="224.4" r="0.7" fill="#d8a8c0"/>
<rect x="324.5" y="220.4" width="14" height="8" rx="4.0" fill="#2db42d"/><circle cx="331.5" cy="224.4" r="1.4" fill="#3a2a3a"/><circle cx="331.5" cy="224.4" r="0.7" fill="#d8a8c0"/>
<rect x="284.7" y="234.2" width="14" height="8" rx="4.0" fill="#2db42d"/><circle cx="291.7" cy="238.2" r="1.4" fill="#3a2a3a"/><circle cx="291.7" cy="238.2" r="0.7" fill="#d8a8c0"/>
<rect x="324.5" y="234.2" width="14" height="8" rx="4.0" fill="#2db42d"/><circle cx="331.5" cy="238.2" r="1.4" fill="#3a2a3a"/><circle cx="331.5" cy="238.2" r="0.7" fill="#d8a8c0"/>
<circle cx="298.9" cy="188.1" r="3.7049999999999996" fill="#2db42d"/><circle cx="298.9" cy="188.1" r="1.48" fill="#1a1a1a"/><circle cx="298.9" cy="188.1" r="0.75" fill="#e0c8d8"/>
<circle cx="324.9" cy="188.1" r="3.7049999999999996" fill="#2db42d"/><circle cx="324.9" cy="188.1" r="1.48" fill="#1a1a1a"/><circle cx="324.9" cy="188.1" r="0.75" fill="#e0c8d8"/>
<circle cx="315" cy="204" r="3.7049999999999996" fill="#2db42d"/><circle cx="315" cy="204" r="1.48" fill="#1a1a1a"/><circle cx="315" cy="204" r="0.75" fill="#e0c8d8"/>
<circle cx="315" cy="231.6" r="3.7049999999999996" fill="#2db42d"/><circle cx="315" cy="231.6" r="1.48" fill="#1a1a1a"/><circle cx="315" cy="231.6" r="0.75" fill="#e0c8d8"/>
<circle cx="198.3" cy="221.1" r="3.8" fill="#2db42d"/><circle cx="198.3" cy="221.1" r="1.52" fill="#1a1a1a"/><circle cx="198.3" cy="221.1" r="0.75" fill="#e0c8d8"/>
<circle cx="213.9" cy="221.1" r="3.8" fill="#2db42d"/><circle cx="213.9" cy="221.1" r="1.52" fill="#1a1a1a"/><circle cx="213.9" cy="221.1" r="0.75" fill="#e0c8d8"/>
<circle cx="241.7" cy="221.1" r="3.8" fill="#2db42d"/><circle cx="241.7" cy="221.1" r="1.52" fill="#1a1a1a"/><circle cx="241.7" cy="221.1" r="0.75" fill="#e0c8d8"/>
<circle cx="198.3" cy="246.7" r="3.8" fill="#2db42d"/><circle cx="198.3" cy="246.7" r="1.52" fill="#1a1a1a"/><circle cx="198.3" cy="246.7" r="0.75" fill="#e0c8d8"/>
<circle cx="213.9" cy="233.8" r="3.8" fill="#2db42d"/><circle cx="213.9" cy="233.8" r="1.52" fill="#1a1a1a"/><circle cx="213.9" cy="233.8" r="0.75" fill="#e0c8d8"/>
<circle cx="242.3" cy="233.8" r="3.8" fill="#2db42d"/><circle cx="242.3" cy="233.8" r="1.52" fill="#1a1a1a"/><circle cx="242.3" cy="233.8" r="0.75" fill="#e0c8d8"/>
<circle cx="257.2" cy="236.7" r="3.8" fill="#2db42d"/><circle cx="257.2" cy="236.7" r="1.52" fill="#1a1a1a"/><circle cx="257.2" cy="236.7" r="0.75" fill="#e0c8d8"/>
<circle cx="257.2" cy="236.7" r="5.5" fill="none" stroke="#bcbcbc" stroke-width="0.9"/>
<circle cx="211.7" cy="251.3" r="6.1" fill="none" stroke="#2db42d" stroke-width="3.3999999999999995"/><circle cx="211.7" cy="251.3" r="0.9" fill="#d0d0a0"/>
<circle cx="260.6" cy="251.3" r="6.1" fill="none" stroke="#2db42d" stroke-width="3.3999999999999995"/><circle cx="260.6" cy="251.3" r="0.9" fill="#d0d0a0"/>
<circle cx="215.7" cy="268.9" r="3.7049999999999996" fill="#2db42d"/><circle cx="215.7" cy="268.9" r="1.48" fill="#1a1a1a"/><circle cx="215.7" cy="268.9" r="0.75" fill="#e0c8d8"/>
<circle cx="252.8" cy="268.9" r="3.7049999999999996" fill="#2db42d"/><circle cx="252.8" cy="268.9" r="1.48" fill="#1a1a1a"/><circle cx="252.8" cy="268.9" r="0.75" fill="#e0c8d8"/>
<circle cx="281.7" cy="251.1" r="3.8" fill="#2db42d"/><circle cx="281.7" cy="251.1" r="1.52" fill="#1a1a1a"/><circle cx="281.7" cy="251.1" r="0.75" fill="#e0c8d8"/>
<circle cx="281.7" cy="264.9" r="3.8" fill="#2db42d"/><circle cx="281.7" cy="264.9" r="1.52" fill="#1a1a1a"/><circle cx="281.7" cy="264.9" r="0.75" fill="#e0c8d8"/>
<circle cx="312.2" cy="257.4" r="3.8" fill="#2db42d"/><circle cx="312.2" cy="257.4" r="1.52" fill="#1a1a1a"/><circle cx="312.2" cy="257.4" r="0.75" fill="#e0c8d8"/>
<circle cx="338.1" cy="257.4" r="3.8" fill="#2db42d"/><circle cx="338.1" cy="257.4" r="1.52" fill="#1a1a1a"/><circle cx="338.1" cy="257.4" r="0.75" fill="#e0c8d8"/>
<circle cx="331.5" cy="248.5" r="3.8" fill="#2db42d"/><circle cx="331.5" cy="248.5" r="1.52" fill="#1a1a1a"/><circle cx="331.5" cy="248.5" r="0.75" fill="#e0c8d8"/>
<circle cx="358.1" cy="248.5" r="3.8" fill="#2db42d"/><circle cx="358.1" cy="248.5" r="1.52" fill="#1a1a1a"/><circle cx="358.1" cy="248.5" r="0.75" fill="#e0c8d8"/>
<circle cx="194.3" cy="267.8" r="3.8" fill="#2db42d"/><circle cx="194.3" cy="267.8" r="1.52" fill="#1a1a1a"/><circle cx="194.3" cy="267.8" r="0.75" fill="#e0c8d8"/>
<circle cx="285" cy="278.2" r="3.8" fill="#2db42d"/><circle cx="285" cy="278.2" r="1.52" fill="#1a1a1a"/><circle cx="285" cy="278.2" r="0.75" fill="#e0c8d8"/>
<circle cx="311.7" cy="278.2" r="3.8" fill="#2db42d"/><circle cx="311.7" cy="278.2" r="1.52" fill="#1a1a1a"/><circle cx="311.7" cy="278.2" r="0.75" fill="#e0c8d8"/>
<circle cx="298.3" cy="271.1" r="3.7049999999999996" fill="#2db42d"/><circle cx="298.3" cy="271.1" r="1.48" fill="#1a1a1a"/><circle cx="298.3" cy="271.1" r="0.75" fill="#e0c8d8"/>
<circle cx="325" cy="271.1" r="3.7049999999999996" fill="#2db42d"/><circle cx="325" cy="271.1" r="1.48" fill="#1a1a1a"/><circle cx="325" cy="271.1" r="0.75" fill="#e0c8d8"/>
<circle cx="331.5" cy="281.1" r="3.8" fill="#2db42d"/><circle cx="331.5" cy="281.1" r="1.52" fill="#1a1a1a"/><circle cx="331.5" cy="281.1" r="0.75" fill="#e0c8d8"/>
<circle cx="358.1" cy="281.1" r="3.8" fill="#2db42d"/><circle cx="358.1" cy="281.1" r="1.52" fill="#1a1a1a"/><circle cx="358.1" cy="281.1" r="0.75" fill="#e0c8d8"/>
<circle cx="361.8" cy="138" r="3.8" fill="#2db42d"/><circle cx="361.8" cy="138" r="1.52" fill="#1a1a1a"/><circle cx="361.8" cy="138" r="0.75" fill="#e0c8d8"/>
<circle cx="375.1" cy="138" r="3.8" fill="#2db42d"/><circle cx="375.1" cy="138" r="1.52" fill="#1a1a1a"/><circle cx="375.1" cy="138" r="0.75" fill="#e0c8d8"/>
<circle cx="401" cy="131" r="3.9899999999999998" fill="#2db42d"/><circle cx="401" cy="131" r="1.60" fill="#1a1a1a"/><circle cx="401" cy="131" r="0.75" fill="#e0c8d8"/>
<circle cx="415.5" cy="131" r="3.9899999999999998" fill="#2db42d"/><circle cx="415.5" cy="131" r="1.60" fill="#1a1a1a"/><circle cx="415.5" cy="131" r="0.75" fill="#e0c8d8"/>
<circle cx="430.7" cy="127.8" r="3.8" fill="#2db42d"/><circle cx="430.7" cy="127.8" r="1.52" fill="#1a1a1a"/><circle cx="430.7" cy="127.8" r="0.75" fill="#e0c8d8"/>
<circle cx="458.9" cy="127.8" r="3.8" fill="#2db42d"/><circle cx="458.9" cy="127.8" r="1.52" fill="#1a1a1a"/><circle cx="458.9" cy="127.8" r="0.75" fill="#e0c8d8"/>
<rect x="453.7" y="133.6" width="10" height="15.2" rx="5" fill="#2db42d"/><circle cx="458.7" cy="141.2" r="1.3" fill="#ddd"/>
<rect x="466.9" y="133.6" width="10" height="15.2" rx="5" fill="#2db42d"/><circle cx="471.9" cy="141.2" r="1.3" fill="#ddd"/>
<rect x="480.2" y="133.6" width="10" height="15.2" rx="5" fill="#2db42d"/><circle cx="485.2" cy="141.2" r="1.3" fill="#ddd"/>
<circle cx="438.8" cy="154.8" r="3.8" fill="#2db42d"/><circle cx="438.8" cy="154.8" r="1.52" fill="#1a1a1a"/><circle cx="438.8" cy="154.8" r="0.75" fill="#e0c8d8"/>
<circle cx="451.6" cy="154.8" r="3.8" fill="#2db42d"/><circle cx="451.6" cy="154.8" r="1.52" fill="#1a1a1a"/><circle cx="451.6" cy="154.8" r="0.75" fill="#e0c8d8"/>
<circle cx="350.7" cy="161.1" r="3.8" fill="#2db42d"/><circle cx="350.7" cy="161.1" r="1.52" fill="#1a1a1a"/><circle cx="350.7" cy="161.1" r="0.75" fill="#e0c8d8"/>
<circle cx="378.2" cy="161.1" r="3.8" fill="#2db42d"/><circle cx="378.2" cy="161.1" r="1.52" fill="#1a1a1a"/><circle cx="378.2" cy="161.1" r="0.75" fill="#e0c8d8"/>
<circle cx="391.6" cy="161.6" r="3.8" fill="#2db42d"/><circle cx="391.6" cy="161.6" r="1.52" fill="#1a1a1a"/><circle cx="391.6" cy="161.6" r="0.75" fill="#e0c8d8"/>
<circle cx="418.2" cy="161.6" r="3.8" fill="#2db42d"/><circle cx="418.2" cy="161.6" r="1.52" fill="#1a1a1a"/><circle cx="418.2" cy="161.6" r="0.75" fill="#e0c8d8"/>
<circle cx="472" cy="174.6" r="4.2749999999999995" fill="#2db42d"/><circle cx="472" cy="174.6" r="1.71" fill="#1a1a1a"/><circle cx="472" cy="174.6" r="0.75" fill="#e0c8d8"/>
<circle cx="472" cy="174.6" r="6" fill="none" stroke="#bcbcbc" stroke-width="0.9"/>
<circle cx="472" cy="187.4" r="4.2749999999999995" fill="#2db42d"/><circle cx="472" cy="187.4" r="1.71" fill="#1a1a1a"/><circle cx="472" cy="187.4" r="0.75" fill="#e0c8d8"/>
<circle cx="472" cy="201.2" r="4.2749999999999995" fill="#2db42d"/><circle cx="472" cy="201.2" r="1.71" fill="#1a1a1a"/><circle cx="472" cy="201.2" r="0.75" fill="#e0c8d8"/>
<circle cx="350.7" cy="181.1" r="3.8" fill="#2db42d"/><circle cx="350.7" cy="181.1" r="1.52" fill="#1a1a1a"/><circle cx="350.7" cy="181.1" r="0.75" fill="#e0c8d8"/>
<circle cx="378.2" cy="181.1" r="3.8" fill="#2db42d"/><circle cx="378.2" cy="181.1" r="1.52" fill="#1a1a1a"/><circle cx="378.2" cy="181.1" r="0.75" fill="#e0c8d8"/>
<rect x="394.9" y="173.6" width="14" height="8" rx="4.0" fill="#2db42d"/><circle cx="401.9" cy="177.6" r="1.4" fill="#3a2a3a"/><circle cx="401.9" cy="177.6" r="0.7" fill="#d8a8c0"/>
<rect x="434.9" y="173.6" width="14" height="8" rx="4.0" fill="#2db42d"/><circle cx="441.9" cy="177.6" r="1.4" fill="#3a2a3a"/><circle cx="441.9" cy="177.6" r="0.7" fill="#d8a8c0"/>
<rect x="394.9" y="186.9" width="14" height="8" rx="4.0" fill="#2db42d"/><circle cx="401.9" cy="190.9" r="1.4" fill="#3a2a3a"/><circle cx="401.9" cy="190.9" r="0.7" fill="#d8a8c0"/>
<rect x="434.9" y="186.9" width="14" height="8" rx="4.0" fill="#2db42d"/><circle cx="441.9" cy="190.9" r="1.4" fill="#3a2a3a"/><circle cx="441.9" cy="190.9" r="0.7" fill="#d8a8c0"/>
<rect x="394.9" y="200.3" width="14" height="8" rx="4.0" fill="#2db42d"/><circle cx="401.9" cy="204.3" r="1.4" fill="#3a2a3a"/><circle cx="401.9" cy="204.3" r="0.7" fill="#d8a8c0"/>
<rect x="434.9" y="200.3" width="14" height="8" rx="4.0" fill="#2db42d"/><circle cx="441.9" cy="204.3" r="1.4" fill="#3a2a3a"/><circle cx="441.9" cy="204.3" r="0.7" fill="#d8a8c0"/>
<rect x="394.9" y="212.9" width="14" height="8" rx="4.0" fill="#2db42d"/><circle cx="401.9" cy="216.9" r="1.4" fill="#3a2a3a"/><circle cx="401.9" cy="216.9" r="0.7" fill="#d8a8c0"/>
<rect x="434.9" y="212.9" width="14" height="8" rx="4.0" fill="#2db42d"/><circle cx="441.9" cy="216.9" r="1.4" fill="#3a2a3a"/><circle cx="441.9" cy="216.9" r="0.7" fill="#d8a8c0"/>
<circle cx="421.1" cy="183.5" r="3.42" fill="#2db42d"/><circle cx="421.1" cy="183.5" r="1.37" fill="#1a1a1a"/><circle cx="421.1" cy="183.5" r="0.75" fill="#e0c8d8"/>
<circle cx="421.1" cy="212.4" r="3.42" fill="#2db42d"/><circle cx="421.1" cy="212.4" r="1.37" fill="#1a1a1a"/><circle cx="421.1" cy="212.4" r="0.75" fill="#e0c8d8"/>
<circle cx="355.1" cy="197.8" r="3.8" fill="#2db42d"/><circle cx="355.1" cy="197.8" r="1.52" fill="#1a1a1a"/><circle cx="355.1" cy="197.8" r="0.75" fill="#e0c8d8"/>
<circle cx="382.2" cy="197.8" r="3.8" fill="#2db42d"/><circle cx="382.2" cy="197.8" r="1.52" fill="#1a1a1a"/><circle cx="382.2" cy="197.8" r="0.75" fill="#e0c8d8"/>
<circle cx="355.1" cy="214.4" r="3.8" fill="#2db42d"/><circle cx="355.1" cy="214.4" r="1.52" fill="#1a1a1a"/><circle cx="355.1" cy="214.4" r="0.75" fill="#e0c8d8"/>
<circle cx="382.2" cy="214.4" r="3.8" fill="#2db42d"/><circle cx="382.2" cy="214.4" r="1.52" fill="#1a1a1a"/><circle cx="382.2" cy="214.4" r="0.75" fill="#e0c8d8"/>
<circle cx="355.1" cy="227.1" r="3.8" fill="#2db42d"/><circle cx="355.1" cy="227.1" r="1.52" fill="#1a1a1a"/><circle cx="355.1" cy="227.1" r="0.75" fill="#e0c8d8"/>
<circle cx="381.1" cy="227.1" r="3.8" fill="#2db42d"/><circle cx="381.1" cy="227.1" r="1.52" fill="#1a1a1a"/><circle cx="381.1" cy="227.1" r="0.75" fill="#e0c8d8"/>
<circle cx="461.8" cy="234.4" r="3.9899999999999998" fill="#2db42d"/><circle cx="461.8" cy="234.4" r="1.60" fill="#1a1a1a"/><circle cx="461.8" cy="234.4" r="0.75" fill="#e0c8d8"/>
<circle cx="475.6" cy="234.4" r="3.9899999999999998" fill="#2db42d"/><circle cx="475.6" cy="234.4" r="1.60" fill="#1a1a1a"/><circle cx="475.6" cy="234.4" r="0.75" fill="#e0c8d8"/>
<circle cx="441.8" cy="230.7" r="3.8" fill="#2db42d"/><circle cx="441.8" cy="230.7" r="1.52" fill="#1a1a1a"/><circle cx="441.8" cy="230.7" r="0.75" fill="#e0c8d8"/>
<circle cx="441.8" cy="256.7" r="3.8" fill="#2db42d"/><circle cx="441.8" cy="256.7" r="1.52" fill="#1a1a1a"/><circle cx="441.8" cy="256.7" r="0.75" fill="#e0c8d8"/>
<circle cx="395" cy="238.2" r="3.8" fill="#2db42d"/><circle cx="395" cy="238.2" r="1.52" fill="#1a1a1a"/><circle cx="395" cy="238.2" r="0.75" fill="#e0c8d8"/>
<circle cx="421.8" cy="238.2" r="3.8" fill="#2db42d"/><circle cx="421.8" cy="238.2" r="1.52" fill="#1a1a1a"/><circle cx="421.8" cy="238.2" r="0.75" fill="#e0c8d8"/>
<rect x="365.5" y="237.7" width="11.8" height="6.8" rx="3.4" fill="#2db42d"/><circle cx="371.4" cy="241.1" r="1.4" fill="#3a2a3a"/><circle cx="371.4" cy="241.1" r="0.7" fill="#d8a8c0"/>
<rect x="365.5" y="251.0" width="11.8" height="6.8" rx="3.4" fill="#2db42d"/><circle cx="371.4" cy="254.4" r="1.4" fill="#3a2a3a"/><circle cx="371.4" cy="254.4" r="0.7" fill="#d8a8c0"/>
<circle cx="398.2" cy="254.4" r="3.8" fill="#2db42d"/><circle cx="398.2" cy="254.4" r="1.52" fill="#1a1a1a"/><circle cx="398.2" cy="254.4" r="0.75" fill="#e0c8d8"/>
<circle cx="424.4" cy="254.4" r="3.8" fill="#2db42d"/><circle cx="424.4" cy="254.4" r="1.52" fill="#1a1a1a"/><circle cx="424.4" cy="254.4" r="0.75" fill="#e0c8d8"/>
<circle cx="404.9" cy="267.8" r="3.8" fill="#2db42d"/><circle cx="404.9" cy="267.8" r="1.52" fill="#1a1a1a"/><circle cx="404.9" cy="267.8" r="0.75" fill="#e0c8d8"/>
<circle cx="431.1" cy="267.8" r="3.8" fill="#2db42d"/><circle cx="431.1" cy="267.8" r="1.52" fill="#1a1a1a"/><circle cx="431.1" cy="267.8" r="0.75" fill="#e0c8d8"/>
<circle cx="398.2" cy="281.1" r="3.8" fill="#2db42d"/><circle cx="398.2" cy="281.1" r="1.52" fill="#1a1a1a"/><circle cx="398.2" cy="281.1" r="0.75" fill="#e0c8d8"/>
<circle cx="424.4" cy="281.1" r="3.8" fill="#2db42d"/><circle cx="424.4" cy="281.1" r="1.52" fill="#1a1a1a"/><circle cx="424.4" cy="281.1" r="0.75" fill="#e0c8d8"/>
<circle cx="437.3" cy="267.8" r="3.9899999999999998" fill="#2db42d"/><circle cx="437.3" cy="267.8" r="1.60" fill="#1a1a1a"/><circle cx="437.3" cy="267.8" r="0.75" fill="#e0c8d8"/>
<circle cx="452.2" cy="267.8" r="3.9899999999999998" fill="#2db42d"/><circle cx="452.2" cy="267.8" r="1.60" fill="#1a1a1a"/><circle cx="452.2" cy="267.8" r="0.75" fill="#e0c8d8"/>
<circle cx="472.2" cy="262.2" r="3.8" fill="#2db42d"/><circle cx="472.2" cy="262.2" r="1.52" fill="#1a1a1a"/><circle cx="472.2" cy="262.2" r="0.75" fill="#e0c8d8"/>
<circle cx="472.2" cy="262.2" r="5.5" fill="none" stroke="#bcbcbc" stroke-width="0.9"/>
<circle cx="472.2" cy="274.4" r="3.8" fill="#2db42d"/><circle cx="472.2" cy="274.4" r="1.52" fill="#1a1a1a"/><circle cx="472.2" cy="274.4" r="0.75" fill="#e0c8d8"/>
<circle cx="351.4" cy="270.7" r="4.56" fill="#2db42d"/><circle cx="351.4" cy="270.7" r="1.82" fill="#1a1a1a"/><circle cx="351.4" cy="270.7" r="0.75" fill="#e0c8d8"/>
<circle cx="365.5" cy="270.7" r="4.56" fill="#2db42d"/><circle cx="365.5" cy="270.7" r="1.82" fill="#1a1a1a"/><circle cx="365.5" cy="270.7" r="0.75" fill="#e0c8d8"/>
<rect x="381.75" y="267.2" width="13.3" height="7" rx="3.5" fill="#2db42d"/><circle cx="388.4" cy="270.7" r="1.4" fill="#3a2a3a"/><circle cx="388.4" cy="270.7" r="0.7" fill="#d8a8c0"/>
</svg>
<svg class="a" style="left:0;top:0" width="720" height="405" viewBox="0 0 720 405">
<rect x="1.5" y="1" width="8.5" height="8" fill="#c8c8c0"/><rect x="2.5" y="2.5" width="6.5" height="5" fill="#30a030"/>
<rect x="693" y="6" width="4" height="1.3" fill="#000"/>
<rect x="702.5" y="2.6" width="4" height="3.2" fill="none" stroke="#000" stroke-width="0.9"/><rect x="701.5" y="4.2" width="3.5" height="3.2" fill="#d4d0c8" stroke="#000" stroke-width="0.9"/>
<path d="M712.3,2.7 L716.7,7.2 M716.7,2.7 L712.3,7.2" stroke="#000" stroke-width="1.3"/>
<rect x="1.2" y="21.5" width="1" height="12.5" fill="#fff"/><rect x="3.2" y="21.5" width="1" height="12.5" fill="#808080"/>
<text x="8" y="28.6" font-size="6.2" font-weight="bold" fill="#d83a5c" font-style="italic" letter-spacing="-0.3">design</text>
<text x="20.5" y="32.6" font-size="5.2" font-weight="bold" fill="#3aaac0" letter-spacing="-0.2">link</text>
<defs><linearGradient id="gq" x1="0" y1="0" x2="1" y2="1"><stop offset="0" stop-color="#a8d830"/><stop offset="1" stop-color="#3a8a10"/></linearGradient></defs>
<rect x="36.3" y="24.4" width="7.5" height="7.9" fill="url(#gq)"/><path d="M38.5,26 L41.5,30" stroke="#e8f080" stroke-width="1"/>
<text x="45" y="27.9" font-size="3.4" font-weight="bold" fill="#505050">PCB</text><text x="45" y="32.4" font-size="3.4" font-weight="bold" fill="#505050">QUOTE</text>
<rect x="62" y="21.5" width="1" height="12.5" fill="#808080"/><rect x="63" y="21.5" width="1" height="12.5" fill="#fff"/>
<rect x="65.5" y="21.5" width="1" height="12.5" fill="#fff"/><rect x="67.5" y="21.5" width="1" height="12.5" fill="#808080"/>
<circle cx="76.6" cy="27.8" r="4.1" fill="none" stroke="#b0b0b0" stroke-width="0.9"/><path d="M74.5,27.3 H79.5 M78,25.6 L79.8,27.3 L78,29" fill="none" stroke="#000" stroke-width="1.1"/><path d="M78.6,30.3 L81.4,30.3 L80,32.2 Z" fill="#000"/>
<path d="M85.2,24.6 H92.3 V31.7 H91 V28.2 H86.5 V31.7 H85.2 Z" fill="none" stroke="#111" stroke-width="1.3"/><rect x="86.2" y="24.6" width="5" height="2.6" fill="none" stroke="#111" stroke-width="0.9"/>
<rect x="97.8" y="27.6" width="8.2" height="3" fill="#111"/><rect x="97.5" y="27" width="1.6" height="4.2" fill="#111"/><rect x="104.6" y="27" width="1.6" height="4.2" fill="#111"/><rect x="99.8" y="24.4" width="4.2" height="1.3" fill="#909090"/><rect x="99.8" y="31.4" width="4.2" height="1.2" fill="#909090"/>
<rect x="110.4" y="24.8" width="8.8" height="6.3" rx="1" fill="#202020"/><circle cx="114.8" cy="27.9" r="2.2" fill="#38a8e8"/>
<rect x="123" y="21.5" width="1" height="12.5" fill="#808080"/><rect x="124" y="21.5" width="1" height="12.5" fill="#fff"/>
<path d="M129.2,24 L132.2,25.8 L129.2,27.7 Z" fill="#111"/><rect x="129.3" y="28.4" width="3.4" height="3.9" fill="#a0a0a0"/>
<rect x="139.4" y="21.5" width="1" height="12.5" fill="#808080"/><rect x="140.4" y="21.5" width="1" height="12.5" fill="#fff"/>
<rect x="143" y="23.4" width="2.5" height="9.3" rx="1.1" fill="#151515"/>
<rect x="146.3" y="23.4" width="2.5" height="9.3" rx="1.1" fill="#151515"/>
<rect x="149.6" y="23.4" width="2.5" height="9.3" rx="1.1" fill="#151515"/>
<rect x="155.2" y="21.5" width="1" height="12.5" fill="#808080"/><rect x="156.2" y="21.5" width="1" height="12.5" fill="#fff"/>
<rect x="159.6" y="25.2" width="8.5" height="5.8" fill="#9cc4e4"/><rect x="160.5" y="26.2" width="6.5" height="2.6" fill="#4a88c8"/><path d="M166,30.4 L169,30.4 L167.5,32.3 Z" fill="#000"/>
<rect x="172" y="25.2" width="8.5" height="5.8" fill="#f4d898"/><circle cx="174.5" cy="28" r="1.3" fill="#e8a030"/><circle cx="178" cy="28" r="1.3" fill="#e8a030"/><path d="M179,30.4 L182,30.4 L180.5,32.3 Z" fill="#000"/>
<rect x="185.2" y="21.5" width="1" height="12.5" fill="#808080"/><rect x="186.2" y="21.5" width="1" height="12.5" fill="#fff"/>
<circle cx="192.2" cy="27.3" r="3.6" fill="#e8e8e8" stroke="#a8a8a8" stroke-width="1.1"/><path d="M194.79999999999998,29.900000000000002 L196.79999999999998,31.9" stroke="#a0a0a0" stroke-width="1.3"/>
<rect x="190.0" y="26.3" width="4.4" height="2" fill="#000"/>
<circle cx="205.4" cy="27.3" r="3.6" fill="#e8e8e8" stroke="#a8a8a8" stroke-width="1.1"/><path d="M208.0,29.900000000000002 L210.0,31.9" stroke="#a0a0a0" stroke-width="1.3"/>
<path d="M203.4,27.3 H207.4 M205.4,25.3 V29.3" stroke="#000" stroke-width="1.3"/>
<circle cx="218" cy="27.3" r="3.6" fill="#e8e8e8" stroke="#a8a8a8" stroke-width="1.1"/><path d="M220.6,29.900000000000002 L222.6,31.9" stroke="#a0a0a0" stroke-width="1.3"/>
<path d="M216,27.3 H220" stroke="#000" stroke-width="1.3"/>
<circle cx="231.1" cy="27.3" r="3.6" fill="#e8e8e8" stroke="#a8a8a8" stroke-width="1.1"/><path d="M233.7,29.900000000000002 L235.7,31.9" stroke="#a0a0a0" stroke-width="1.3"/>
<circle cx="231.1" cy="27.3" r="1.1" fill="#000"/>
<circle cx="243.3" cy="27.3" r="3.6" fill="#e8e8e8" stroke="#a8a8a8" stroke-width="1.1"/><path d="M245.9,29.900000000000002 L247.9,31.9" stroke="#a0a0a0" stroke-width="1.3"/>
<path d="M241.3,26.5 H245.3 M241.3,28.2 H245.3" stroke="#909090" stroke-width="0.8"/><path d="M247.3,30.6 L249.9,30.6 L248.60000000000002,32.3 Z" fill="#000"/>
<rect x="253.6" y="21.5" width="1" height="12.5" fill="#808080"/><rect x="254.6" y="21.5" width="1" height="12.5" fill="#fff"/>
<path d="M258,29.8 Q259,25.2 264.3,26.6 L264.3,28.4" fill="none" stroke="#111" stroke-width="1.6"/><path d="M256.2,27.4 L259.8,31.5 L255.8,31.2 Z" fill="#111"/>
<path d="M276.5,29.8 Q275.5,25.2 270.3,26.6" fill="none" stroke="#a8a8a8" stroke-width="1.6"/><path d="M278.4,27.4 L274.8,31.5 L278.8,31.2 Z" fill="#a8a8a8"/>
<rect x="283" y="21.5" width="1" height="12.5" fill="#808080"/><rect x="284" y="21.5" width="1" height="12.5" fill="#fff"/>
<circle cx="290.3" cy="28.2" r="4.4" fill="#e01838"/><rect x="287.6" y="27.3" width="5.4" height="1.8" fill="#fff"/>
<circle cx="303" cy="25.2" r="1.2" fill="#b8b8b8"/><circle cx="303" cy="30.5" r="2.1" fill="#505050"/>
<rect x="310.8" y="21.5" width="1" height="12.5" fill="#808080"/><rect x="311.8" y="21.5" width="1" height="12.5" fill="#fff"/>
<rect x="314.6" y="21.5" width="1" height="12.5" fill="#808080"/><rect x="315.6" y="21.5" width="1" height="12.5" fill="#fff"/>
<circle cx="322.9" cy="28" r="4.6" fill="#181818"/><text x="320.3" y="30.9" font-size="7.2" font-weight="bold" fill="#fff">?</text>
<rect x="2.5" y="38" width="1" height="10.5" fill="#fff"/><rect x="4.5" y="38" width="1" height="10.5" fill="#808080"/>
<rect x="8.2" y="38.8" width="9" height="8.5" fill="#303030"/>
<rect x="8.90" y="39.50" width="1.9" height="1.7" fill="#d8d8d8"/>
<rect x="8.90" y="42.10" width="1.9" height="1.7" fill="#d8d8d8"/>
<rect x="8.90" y="44.70" width="1.9" height="1.7" fill="#d8d8d8"/>
<rect x="11.70" y="39.50" width="1.9" height="1.7" fill="#d8d8d8"/>
<rect x="11.70" y="42.10" width="1.9" height="1.7" fill="#d8d8d8"/>
<rect x="11.70" y="44.70" width="1.9" height="1.7" fill="#d8d8d8"/>
<rect x="14.50" y="39.50" width="1.9" height="1.7" fill="#d8d8d8"/>
<rect x="14.50" y="42.10" width="1.9" height="1.7" fill="#d8d8d8"/>
<rect x="14.50" y="44.70" width="1.9" height="1.7" fill="#d8d8d8"/>
<path d="M15,45.6 L18,45.6 L16.5,47.6 Z" fill="#000"/>
<rect x="21.6" y="37.5" width="1" height="11.0" fill="#808080"/><rect x="22.6" y="37.5" width="1" height="11.0" fill="#fff"/>
<path d="M62.6,42.2 L66.4,42.2 L64.5,44.4 Z" fill="#000"/>
<text x="76" y="45.2" font-size="4.6" font-weight="bold" fill="#606060">Abc</text><rect x="76" y="46.3" width="8" height="0.7" fill="#909090"/>
<text x="89" y="45.4" font-size="4.6" font-weight="bold" fill="#707070">Sqy</text><rect x="89" y="40" width="8" height="0.7" fill="#a0a0a0"/>
<rect x="100.5" y="37.5" width="1" height="11.0" fill="#808080"/><rect x="101.5" y="37.5" width="1" height="11.0" fill="#fff"/>
<rect x="103" y="37.4" width="12" height="11.4" fill="#e6e4e0" stroke="#808080" stroke-width="0.6"/>
<rect x="104.6" y="39.2" width="3.4" height="3.4" fill="#c0c0c0"/>
<rect x="109.4" y="39.2" width="3.4" height="3.4" fill="#1a1a1a"/>
<rect x="104.6" y="44" width="3.4" height="3.4" fill="#c0c0c0"/>
<rect x="109.4" y="44" width="3.4" height="3.4" fill="#1a1a1a"/>
<rect x="117.8" y="39.2" width="3.4" height="3.4" fill="#1a1a1a"/>
<rect x="122.6" y="39.2" width="3.4" height="3.4" fill="#c0c0c0"/>
<rect x="117.8" y="44" width="3.4" height="3.4" fill="#1a1a1a"/>
<rect x="122.6" y="44" width="3.4" height="3.4" fill="#c0c0c0"/>
<rect x="2" y="52" width="24" height="1" fill="#fff"/><rect x="2" y="53" width="24" height="1" fill="#808080"/><rect x="2" y="55" width="24" height="1" fill="#fff"/><rect x="2" y="56" width="24" height="1" fill="#808080"/>
<path d="M712,54.6 L716,54.6 L714,57 Z" fill="#000"/>
<circle cx="7.6" cy="63.3" r="4.2" fill="#202020"/><rect x="6.8" y="62.3" width="1.8" height="3.8" fill="#fff"/><circle cx="7.7" cy="60.9" r="0.9" fill="#fff"/>
<ellipse cx="20.4" cy="63.5" rx="4.1" ry="2.7" fill="#fff" stroke="#c09090" stroke-width="0.6"/><ellipse cx="20.4" cy="63.5" rx="3.2" ry="1.9" fill="#1890e0"/>
<rect x="3" y="70.5" width="4.5" height="4.5" fill="#2060d0"/><rect x="5.5" y="73.5" width="4.5" height="4.5" fill="#e02060"/><rect x="8" y="76" width="3.5" height="3.5" fill="#20a040"/>
<path d="M17.5,71 V79.5 M16,76.5 H24.5" stroke="#a0a0a0" stroke-width="0.8"/><circle cx="20.8" cy="75" r="1" fill="#303030"/>
<rect x="1" y="84" width="26" height="1" fill="#808080"/><rect x="1" y="85" width="26" height="1" fill="#fff"/>
<rect x="1" y="85.5" width="13" height="12" fill="#ecebe8"/><path d="M1,85.5 H14 M1,85.5 V97.5" stroke="#808080" stroke-width="0.8"/>
<circle cx="7.5" cy="87.8" r="1" fill="#202020"/>
<circle cx="4.5" cy="91" r="1" fill="#202020"/>
<circle cx="10.6" cy="91" r="1" fill="#202020"/>
<circle cx="7.5" cy="94.2" r="1" fill="#202020"/>
<ellipse cx="20.5" cy="91.5" rx="3.6" ry="4.4" fill="#c8c8c8" stroke="#606060" stroke-width="0.9"/><path d="M19,89.5 Q22,89 21.5,92 Q21,94 19.5,93.5" fill="none" stroke="#303030" stroke-width="0.8"/>
<path d="M6.3,100 A2.6,2.6 0 0 0 6.3,105.2 Z M9.2,100 A2.6,2.6 0 0 1 9.2,105.2 Z" fill="#202020"/><rect x="7.4" y="98.5" width="0.7" height="8.5" fill="#a0a0a0"/>
<circle cx="20.5" cy="102.8" r="0.9" fill="#202020"/><circle cx="23" cy="100" r="0.6" fill="#404040"/>
<rect x="3.2" y="111.8" width="8.5" height="8.2" fill="#c0c0c8" stroke="#404040" stroke-width="1"/>
<path d="M16.8,120.8 L21.3,116.3" stroke="#181818" stroke-width="2"/><path d="M22.6,112.5 A3.2,3.2 0 1 0 25.3,115.3 L23.6,116 L22,114.2 Z" fill="#181818"/>
<circle cx="6" cy="127.2" r="3.6" fill="#f8e020"/><circle cx="10.3" cy="131" r="0.9" fill="#181818"/>
<rect x="4.5" y="137.6" width="6.2" height="7.2" fill="#303030"/><rect x="4" y="136.6" width="7.2" height="1" fill="#303030"/><rect x="6" y="138.6" width="0.6" height="5.2" fill="#909090"/><rect x="8.5" y="138.6" width="0.6" height="5.2" fill="#909090"/>
<path d="M17,138 H20 Q23.5,138 23.5,141 Q23.5,144 20,144 H17 Z" fill="none" stroke="#202020" stroke-width="0.9"/><path d="M16,139.5 H17.5 M16,142.5 H17.5" stroke="#202020" stroke-width="0.7"/><path d="M22.5,144 L24.5,144 L23.5,145.5 Z" fill="#000"/>
<path d="M4,151.5 L5.5,150 L7,151.5 M4,154.5 L5.5,156 L7,154.5" fill="none" stroke="#202020" stroke-width="0.9"/><rect x="8.5" y="150" width="3" height="7" fill="#b0b0b0"/>
<rect x="17" y="151" width="7.5" height="6" fill="#a8a8a8"/><rect x="18" y="155.5" width="6" height="1.5" fill="#404040"/>
<path d="M5.6,164.5 V163 A2.2,2.2 0 0 1 10,163 V164.5" fill="none" stroke="#181818" stroke-width="1.3"/><rect x="4" y="164.3" width="7.6" height="5" fill="#181818"/><rect x="7.3" y="165.5" width="1" height="2.2" fill="#d0d0d0"/>
<rect x="4.5" y="174" width="6" height="3" fill="#606060"/><rect x="4" y="178.2" width="7" height="0.8" fill="#707070"/><rect x="4.5" y="180" width="6" height="2" fill="#b0b0b0"/>
<rect x="17" y="174" width="6" height="3" fill="#a0a0a0"/><rect x="16.5" y="178" width="7.5" height="0.8" fill="#606060"/><rect x="16.5" y="179.6" width="7" height="2.6" fill="#303030"/><path d="M23.5,180.5 L25.5,180.5 L24.5,182 Z" fill="#000"/>
<rect x="4" y="190.5" width="8" height="4.5" fill="#f0f0f0" stroke="#303030" stroke-width="0.9"/><rect x="5" y="188" width="3" height="2" fill="#808080"/>
<path d="M17,195 Q17,188 24,187.8" fill="none" stroke="#303030" stroke-width="1.1"/><path d="M17.3,195 V190" stroke="#909090" stroke-width="0.6"/>
<path d="M4.5,208.2 L5.5,202.5 Q6,201.3 7.3,201.2 H12" fill="none" stroke="#303030" stroke-width="1.1"/><rect x="6" y="203" width="5" height="5" fill="#c0c0c0"/>
<path d="M18,204 H22 M20,202 V206" stroke="#181818" stroke-width="1.2"/>
<path d="M3.8,220 V214 Q3.8,211.5 5.6,211.5 Q7.4,211.5 7.4,214 V218 Q7.4,219.5 8.9,219.5 Q10.4,219.5 10.4,218 V212" fill="none" stroke="#303030" stroke-width="0.9"/>
<path d="M4.2,224 L7,225.5 L8,229 L10.8,230.8" fill="none" stroke="#1870c8" stroke-width="1.1"/><circle cx="4.2" cy="224" r="1.2" fill="#20a040"/><circle cx="10.8" cy="230.8" r="1.2" fill="#20a040"/>
<path d="M17,224 L20,225.3 L22,228 L24.3,231" fill="none" stroke="#1870c8" stroke-width="1.1"/><circle cx="21" cy="226.5" r="1.1" fill="#e02060"/><circle cx="24.3" cy="231" r="1.1" fill="#20a040"/><circle cx="17" cy="224" r="1" fill="#20a040"/>
<rect x="1" y="234.3" width="26" height="0.8" fill="#808080"/><rect x="1" y="235.1" width="26" height="0.8" fill="#fff"/>
<path d="M3,247.6 H8.5 L10.5,240" fill="none" stroke="#303030" stroke-width="1"/>
<text x="17" y="247.3" font-size="8.6" fill="#303030">T</text>
<circle cx="7.2" cy="256.5" r="3.9" fill="none" stroke="#202020" stroke-width="1.1"/><path d="M16.5,259.8 Q20.3,253.5 24.3,259.8" fill="none" stroke="#202020" stroke-width="1.1"/>
<rect x="4.2" y="263.8" width="6.8" height="9" fill="#202020"/><path d="M17.5,273 V267.5 L21,264 H24 V273 Z" fill="#f0f0f0" stroke="#404040" stroke-width="0.8"/>
<ellipse cx="7.5" cy="282.8" rx="4.4" ry="1.7" fill="#30b030"/><ellipse cx="7.5" cy="279" rx="4.4" ry="1.8" fill="#30b030"/><ellipse cx="7.5" cy="279" rx="1.5" ry="0.6" fill="#fff"/>
<path d="M15,280.5 H25" stroke="#e8d830" stroke-width="1"/><circle cx="16.5" cy="280.5" r="1.3" fill="#30b030"/><circle cx="23.5" cy="280.5" r="1.3" fill="#30b030"/>
<ellipse cx="7.5" cy="293.5" rx="4.2" ry="1.8" fill="none" stroke="#404040" stroke-width="0.9"/><ellipse cx="7.5" cy="291.3" rx="4.2" ry="1.8" fill="#e0e0e0" stroke="#404040" stroke-width="0.9"/>
<path d="M18,289 H20 Q23.6,289 23.6,293 Q23.6,297 20,297 H18 Z" fill="none" stroke="#303030" stroke-width="0.9"/><path d="M18,287.5 V298.5 M16,291 H18 M16,295 H18" stroke="#303030" stroke-width="0.7"/>
<path d="M3.5,304.5 V306.5 M11.5,304.5 V306.5 M3.5,305.5 H11.5" stroke="#303030" stroke-width="0.7"/><path d="M5,305.5 L6.5,304.7 V306.3 Z M10,305.5 L8.5,304.7 V306.3 Z" fill="#303030"/>
<rect x="1" y="312.6" width="26" height="0.8" fill="#808080"/><rect x="1" y="313.4" width="26" height="0.8" fill="#fff"/>
<circle cx="4.3" cy="318.8" r="0.9" fill="#181818"/>
<circle cx="7.5" cy="317.7" r="0.9" fill="#181818"/>
<circle cx="10.8" cy="318.8" r="0.9" fill="#181818"/>
<circle cx="3.7" cy="322" r="0.9" fill="#181818"/>
<circle cx="7.5" cy="322" r="0.9" fill="#181818"/>
<circle cx="11.3" cy="322" r="0.9" fill="#181818"/>
<circle cx="4.7" cy="325" r="0.9" fill="#181818"/>
<circle cx="8.5" cy="325.5" r="0.9" fill="#181818"/>
<path d="M17.3,318 L20.3,319.5 L24,324.5" fill="none" stroke="#1870c8" stroke-width="1.1"/><circle cx="17.3" cy="318" r="1" fill="#30b030"/><circle cx="24" cy="324.5" r="1.1" fill="#30b030"/><text x="16" y="326.3" font-size="5" font-weight="bold" fill="#303030">A</text>
<path d="M5,331 L9,333.5 L5,336 M3,332 H5 M3,335 H5 M9,333.5 H11.5" fill="none" stroke="#505050" stroke-width="0.7"/>
<path d="M16.5,331.5 H21.5" stroke="#404040" stroke-width="1.2"/><circle cx="21.4" cy="335" r="2.6" fill="#40b840"/><path d="M20,335 L21.2,336 L23,333.6" fill="none" stroke="#fff" stroke-width="0.7"/>
<path d="M7.3,342 L11.3,350 H3.3 Z" fill="#f8d020"/><rect x="6.9" y="344.2" width="0.8" height="3.5" fill="#303030"/><rect x="6.9" y="348.4" width="0.8" height="0.8" fill="#303030"/>
<path d="M713.5,67.6 L717.5,67.6 L715.5,65 Z" fill="#000"/>
<path d="M713.5,358.6 L717.5,358.6 L715.5,361.2 Z" fill="#000"/>
<path d="M30.8,369.7 L33.4,367.5 V371.9 Z" fill="#000"/>
<path d="M708,369.7 L705.4,367.5 V371.9 Z" fill="#000"/>
<path d="M275,379.6 L277.4,382 L275,384.4 L272.6,382 Z" fill="#000"/>
<rect x="589.5" y="376" width="1" height="12" fill="#fff"/>
<rect x="591.6" y="380" width="1" height="6.5" fill="#808080"/><circle cx="592" cy="377.8" r="0.8" fill="#802030"/>
<text x="597.5" y="386" font-size="8.5" fill="#303030">A</text><path d="M596,386 H598" stroke="#606060" stroke-width="0.6"/>
<rect x="608.5" y="379" width="7.5" height="7" fill="none" stroke="#404040" stroke-width="1"/><path d="M612,379 V386 M608.5,382.5 H616" stroke="#404040" stroke-width="0.8"/>
<circle cx="625" cy="380" r="2" fill="#303060"/><ellipse cx="626" cy="383" rx="3.5" ry="2.3" fill="#e8c020"/>
<rect x="633" y="378.5" width="7" height="8" fill="#208070" stroke="#303030" stroke-width="0.6"/><path d="M636,386 L641,380" stroke="#d02040" stroke-width="1.2"/>
<rect x="645" y="378.5" width="7.5" height="7" fill="#a0a0b0" stroke="#303030" stroke-width="0.8"/><circle cx="652" cy="386" r="0.9" fill="#1020d0"/>
<path d="M660,380 Q662,377 664.5,379.5 Q665.5,382 662.5,383.5" fill="none" stroke="#e8d800" stroke-width="1.5"/><rect x="661" y="382.5" width="7" height="4" fill="#b0b0b8" stroke="#404040" stroke-width="0.6"/>
<text x="670" y="381" font-size="3.3" font-weight="bold" fill="#404040">CAPS</text><text x="670" y="386.3" font-size="3.3" font-weight="bold" fill="#404040">KANA</text>
<path d="M703.5,378.5 L699.8,383 H702.5 L700.5,387 L705,381.5 H702.3 Z" fill="#50b030"/>
<rect x="3.5" y="393.5" width="4" height="4" fill="#e02020"/><rect x="7.7" y="393.5" width="4" height="4" fill="#30a030"/><rect x="3.5" y="397.7" width="4" height="4" fill="#2040d0"/><rect x="7.7" y="397.7" width="4" height="4" fill="#f0d020"/><rect x="3" y="394" width="1.5" height="7" fill="#181818" opacity=".6"/>
<rect x="40.5" y="390.5" width="1" height="13" fill="#808080"/><rect x="41.5" y="390.5" width="1" height="13" fill="#fff"/><rect x="43.5" y="391.5" width="1" height="11" fill="#fff"/><rect x="44.5" y="391.5" width="1" height="11" fill="#808080"/>
<ellipse cx="52" cy="397.5" rx="4.2" ry="3.6" fill="none" stroke="#2878d8" stroke-width="2"/><rect x="49.5" y="396.8" width="5" height="1.2" fill="#2878d8"/><path d="M47.5,400 Q52,392 57,394" fill="none" stroke="#2060c0" stroke-width="0.8"/>
<rect x="60.5" y="394.5" width="8.5" height="6.5" fill="#e8f0f8" stroke="#4a88c8" stroke-width="1"/><path d="M60.5,394.5 L64.7,398 L69,394.5" fill="none" stroke="#3070b0" stroke-width="0.9"/><path d="M62,393 Q65,391.5 68,393.5" fill="none" stroke="#40a0e0" stroke-width="1"/>
<rect x="73.5" y="393" width="8.5" height="9.5" fill="#f0e8c0" stroke="#807040" stroke-width="1"/><path d="M75,398 L77.5,400.5 L81,394.5" fill="none" stroke="#2070c0" stroke-width="1.5"/>
<rect x="86.8" y="393.2" width="8.5" height="9" fill="#e0e8f0" stroke="#606878" stroke-width="1"/><circle cx="91" cy="397.5" r="2.2" fill="none" stroke="#4080c0" stroke-width="1"/>
<circle cx="103" cy="397.5" r="4" fill="#f0c020"/><path d="M103,393.5 A4,4 0 0 1 106.5,399.5 L103,397.5 Z" fill="#e03030"/><path d="M99.5,399.5 A4,4 0 0 0 106.5,399.5 L103,397.5 Z" fill="#30a040"/><circle cx="103" cy="397.5" r="1.6" fill="#3070d0" stroke="#fff" stroke-width="0.6"/>
<rect x="112" y="393.5" width="8.5" height="8.5" fill="#f0f4fa" stroke="#3070c0" stroke-width="1"/><path d="M113.5,396 H119 M113.5,398 H119 M113.5,400 H117" stroke="#3070c0" stroke-width="0.8"/><rect x="111" y="399.5" width="3" height="3" fill="#e08030"/>
<rect x="125.5" y="393" width="8.5" height="6.5" fill="#2880d0" stroke="#404850" stroke-width="1"/><rect x="126.5" y="400.3" width="6.5" height="2" fill="#909090"/>
<circle cx="142" cy="397.5" r="4.6" fill="#e86818"/><circle cx="142.6" cy="396.6" r="2.5" fill="#2a58a8"/><path d="M137.6,398 Q139,402.5 143,402" fill="none" stroke="#f0a020" stroke-width="1"/>
<circle cx="154.5" cy="397" r="3.8" fill="#d8e8f8" stroke="#3060b0" stroke-width="1.1"/><path d="M151,397 H158 M154.5,393.2 V400.8" stroke="#3060b0" stroke-width="0.6"/><path d="M157,400 L159.8,402.6" stroke="#505050" stroke-width="1.4"/>
<rect x="163.5" y="393" width="9.5" height="9.5" fill="#f0f0f0" stroke="#208030" stroke-width="1.4"/><path d="M166,395.5 L170.5,400 M170.5,395.5 L166,400" stroke="#208030" stroke-width="1.2"/>
<rect x="176.8" y="394.5" width="9" height="7" fill="#e8e8f0" stroke="#505870" stroke-width="1"/><rect x="176.8" y="393.5" width="3.5" height="3" fill="#30c030"/><rect x="181.5" y="397.5" width="3.5" height="3" fill="#d04060"/>
<rect x="189.2" y="393" width="10" height="9.5" fill="#203890"/><text x="190.2" y="401" font-size="7" font-weight="bold" fill="#fff">W</text>
<path d="M203,394 L208,393 L208,402 L203,402.5 Z" fill="#2050b0"/><rect x="207.5" y="396" width="4" height="6" fill="#6090d0" stroke="#203080" stroke-width="0.6"/>
<rect x="297" y="393.5" width="7.5" height="8" fill="#e8d060"/><circle cx="300.5" cy="397.5" r="2.3" fill="#40a0d0"/><path d="M302,399.5 L305,402" stroke="#3030a0" stroke-width="1"/>
<path d="M354,394 L361,393.5 L360.5,402.5 Q356,400.5 354,402 Z" fill="#e02020"/><path d="M356,395 L358.5,399" stroke="#fff" stroke-width="1"/>
<circle cx="414.5" cy="397.8" r="4.5" fill="#e87020"/><circle cx="415" cy="397" r="2.4" fill="#2050a8"/>
<path d="M475.5,394 Q468.5,394 468.5,398 Q468.5,402.5 475.5,402 L473,399.5 L475,398.5 L472.5,397 L475.5,395.5 Z" fill="#e01828"/>
<text x="523.5" y="400.6" font-size="4.6" font-weight="bold" fill="#d02020">SCH</text>
<rect x="581.5" y="393.6" width="8.5" height="8.2" fill="#b0c8b0"/><rect x="582.5" y="395" width="6.5" height="5.5" fill="#40a040"/>
<circle cx="645.5" cy="397.5" r="3.8" fill="#fff" stroke="#e02020" stroke-width="1.3"/><path d="M643,395 L648,400" stroke="#e02020" stroke-width="1.1"/><rect x="644.8" y="395" width="1.6" height="4" fill="#e0a020"/>
<path d="M652,401 L657,394.5 L661,396 L656,401.5 Z" fill="#a0a0a0"/><path d="M652,399 L660,397" stroke="#30a030" stroke-width="1.2"/>
<path d="M662.5,394 L670.5,394 L671,398.5 Q666.5,402.5 662,398.5 Z" fill="#303020"/><circle cx="666.5" cy="397.5" r="2" fill="#4060d0"/>
<ellipse cx="677" cy="397" rx="4" ry="2.8" fill="#1850e0"/><circle cx="677" cy="397" r="1.1" fill="#fff"/><path d="M674,399 L673,401.5" stroke="#1850e0" stroke-width="1"/>
<rect x="685.5" y="393.5" width="7" height="5.5" fill="#e8f0ff" stroke="#1040c0" stroke-width="0.8"/><rect x="682.5" y="397.8" width="3.6" height="4.2" fill="#505050"/>
</svg>
</body></html>
